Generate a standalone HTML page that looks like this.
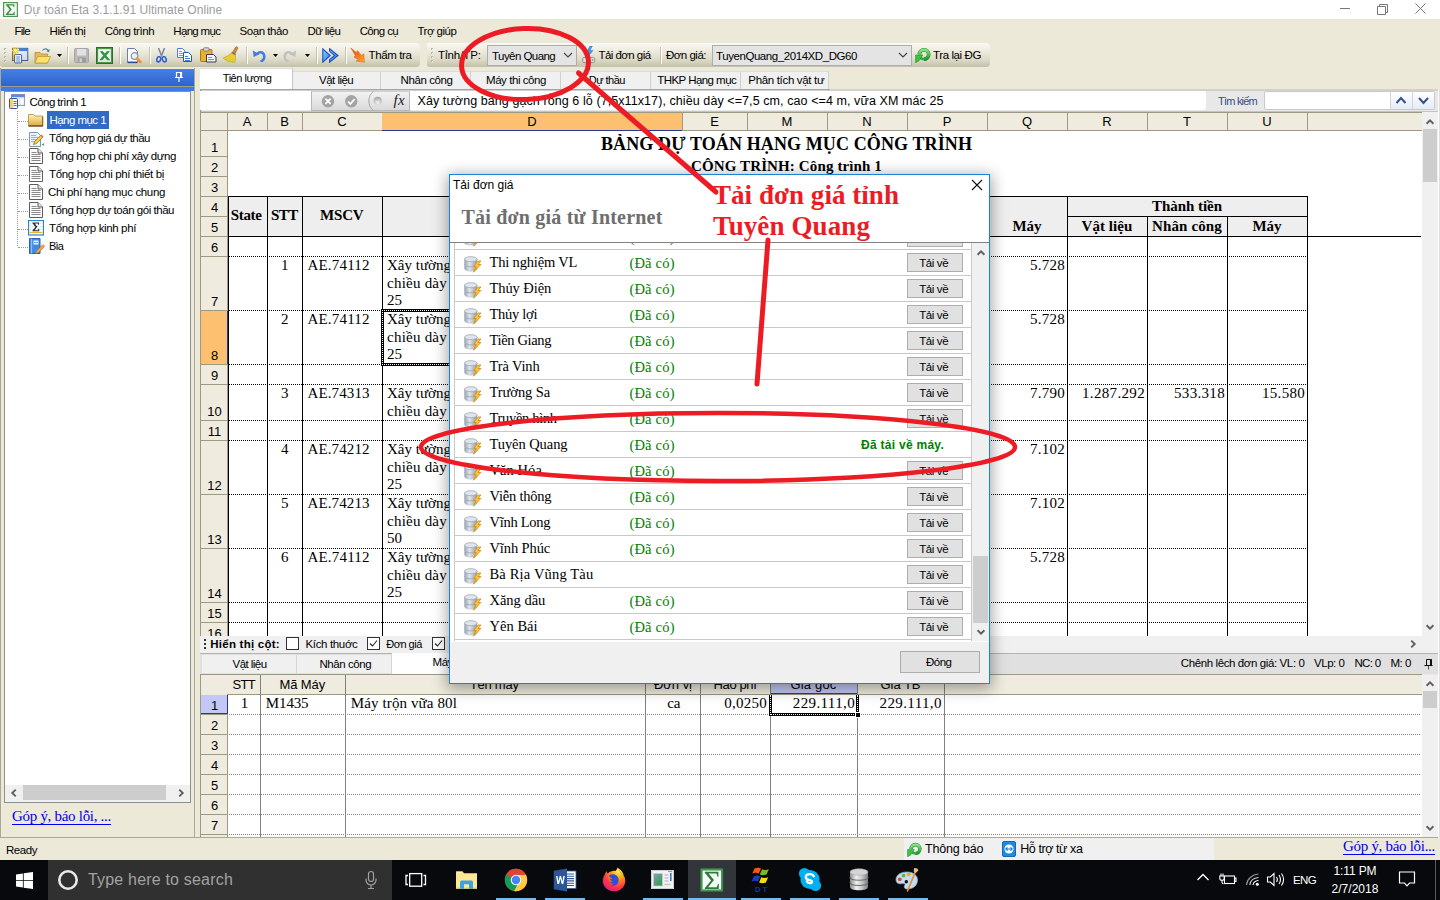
<!DOCTYPE html>
<html lang="vi"><head><meta charset="utf-8"><title>Dự toán Eta</title>
<style>
html,body{margin:0;padding:0;}
body{width:1440px;height:900px;overflow:hidden;position:relative;background:#ece9d8;font-family:'Liberation Sans',sans-serif;}
#root{position:absolute;left:0;top:0;width:1440px;height:900px;overflow:hidden;}
#root div,#root span,#root svg{position:absolute;box-sizing:border-box;}
#root span{white-space:pre;}
</style></head><body><div id="root">
<div style="left:0px;top:0px;width:1440px;height:19px;background:#fff;"></div>
<svg style="left:2.500px;top:1.500px" width="15" height="15" viewBox="0 0 15 15"><rect x="0.600" y="0.600" width="13.800" height="13.800" fill="#f4f8f4" stroke="#4f9a4f" stroke-width="1.200"/><path d="M2.800 2.200h8.600v3h-0.700l-0.600-1.800H5.600l3.200 3.900-3.600 4.400h5l0.800-1.900h0.700v3.200H2.800v-0.800l3.900-4.800-3.900-4.600z" fill="#3f8f3f"/></svg>
<span style="left:23.80px;top:4.00px;font: normal 12px/1 'Liberation Sans',sans-serif;color:#9c9ca0;letter-spacing:0.047px;">Dự toán Eta 3.1.1.91 Ultimate Online</span>
<svg style="left:1330px;top:0px" width="110" height="19" viewBox="0 0 110 19"><g stroke="#777" stroke-width="1" fill="none"><path d="M10 8.5h10"/><path d="M47.5 6.5h8v8h-8z M49.5 6.5v-2h8v8h-2"/><path d="M85.5 3.5l10 10M95.5 3.5l-10 10"/></g></svg>
<div style="left:0px;top:19px;width:1440px;height:24px;background:#ece9d8;"></div>
<span style="left:14.50px;top:26.00px;font: normal 11.5px/1 'Liberation Sans',sans-serif;color:#000;letter-spacing:-0.758px;">File</span>
<span style="left:49.50px;top:26.00px;font: normal 11.5px/1 'Liberation Sans',sans-serif;color:#000;letter-spacing:-0.400px;">Hiển thị</span>
<span style="left:104.70px;top:26.00px;font: normal 11.5px/1 'Liberation Sans',sans-serif;color:#000;letter-spacing:-0.420px;">Công trình</span>
<span style="left:173.30px;top:26.00px;font: normal 11.5px/1 'Liberation Sans',sans-serif;color:#000;letter-spacing:-0.678px;">Hạng mục</span>
<span style="left:239.50px;top:26.00px;font: normal 11.5px/1 'Liberation Sans',sans-serif;color:#000;letter-spacing:-0.438px;">Soạn thảo</span>
<span style="left:307.50px;top:26.00px;font: normal 11.5px/1 'Liberation Sans',sans-serif;color:#000;letter-spacing:-0.616px;">Dữ liệu</span>
<span style="left:359.70px;top:26.00px;font: normal 11.5px/1 'Liberation Sans',sans-serif;color:#000;letter-spacing:-0.649px;">Công cụ</span>
<span style="left:417.50px;top:26.00px;font: normal 11.5px/1 'Liberation Sans',sans-serif;color:#000;letter-spacing:-0.513px;">Trợ giúp</span>
<div style="left:0px;top:43px;width:420px;height:24px;background:linear-gradient(#faf9f4 0%,#edebde 35%,#dedbc9 70%,#c7c4ae 100%);border-radius:0 4px 4px 3px;border-bottom:1px solid #c4c1ad;"></div>
<div style="left:427px;top:43px;width:563px;height:24px;background:linear-gradient(#faf9f4 0%,#edebde 35%,#dedbc9 70%,#c7c4ae 100%);border-radius:0 4px 4px 3px;border-bottom:1px solid #c4c1ad;"></div>
<div style="left:4px;top:48px;width:2px;height:2px;background:#b8b5a2;"></div>
<div style="left:5px;top:49px;width:1px;height:1px;background:#fff;"></div>
<div style="left:4px;top:52px;width:2px;height:2px;background:#b8b5a2;"></div>
<div style="left:5px;top:53px;width:1px;height:1px;background:#fff;"></div>
<div style="left:4px;top:56px;width:2px;height:2px;background:#b8b5a2;"></div>
<div style="left:5px;top:57px;width:1px;height:1px;background:#fff;"></div>
<div style="left:4px;top:60px;width:2px;height:2px;background:#b8b5a2;"></div>
<div style="left:5px;top:61px;width:1px;height:1px;background:#fff;"></div>
<div style="left:431px;top:48px;width:2px;height:2px;background:#b8b5a2;"></div>
<div style="left:432px;top:49px;width:1px;height:1px;background:#fff;"></div>
<div style="left:431px;top:52px;width:2px;height:2px;background:#b8b5a2;"></div>
<div style="left:432px;top:53px;width:1px;height:1px;background:#fff;"></div>
<div style="left:431px;top:56px;width:2px;height:2px;background:#b8b5a2;"></div>
<div style="left:432px;top:57px;width:1px;height:1px;background:#fff;"></div>
<div style="left:431px;top:60px;width:2px;height:2px;background:#b8b5a2;"></div>
<div style="left:432px;top:61px;width:1px;height:1px;background:#fff;"></div>
<div style="left:67px;top:47px;width:1px;height:17px;background:#c5c2b2;"></div>
<div style="left:68px;top:47px;width:1px;height:17px;background:#fff;"></div>
<div style="left:119px;top:47px;width:1px;height:17px;background:#c5c2b2;"></div>
<div style="left:120px;top:47px;width:1px;height:17px;background:#fff;"></div>
<div style="left:149px;top:47px;width:1px;height:17px;background:#c5c2b2;"></div>
<div style="left:150px;top:47px;width:1px;height:17px;background:#fff;"></div>
<div style="left:246px;top:47px;width:1px;height:17px;background:#c5c2b2;"></div>
<div style="left:247px;top:47px;width:1px;height:17px;background:#fff;"></div>
<div style="left:316px;top:47px;width:1px;height:17px;background:#c5c2b2;"></div>
<div style="left:317px;top:47px;width:1px;height:17px;background:#fff;"></div>
<div style="left:345px;top:47px;width:1px;height:17px;background:#c5c2b2;"></div>
<div style="left:346px;top:47px;width:1px;height:17px;background:#fff;"></div>
<span style="left:368.50px;top:50.00px;font: normal 11.5px/1 'Liberation Sans',sans-serif;color:#000;letter-spacing:-0.377px;">Thẩm tra</span>
<span style="left:438.00px;top:50.00px;font: normal 11.5px/1 'Liberation Sans',sans-serif;color:#000;letter-spacing:-0.059px;">Tỉnh/TP:</span>
<div style="left:487px;top:45px;width:90px;height:21px;background:#e4e4e4;border:1px solid #adadad;"></div>
<span style="left:492.00px;top:51.00px;font: normal 11.5px/1 'Liberation Sans',sans-serif;color:#000;letter-spacing:-0.551px;">Tuyên Quang</span>
<svg style="left:563px;top:52px" width="10" height="7" viewBox="0 0 10 7"><path d="M1 1l4 4 4-4" stroke="#444" stroke-width="1.1" fill="none"/></svg>
<span style="left:598.50px;top:50.00px;font: normal 11.5px/1 'Liberation Sans',sans-serif;color:#000;letter-spacing:-0.550px;">Tải đơn giá</span>
<div style="left:660px;top:47px;width:1px;height:17px;background:#c5c2b2;"></div>
<div style="left:661px;top:47px;width:1px;height:17px;background:#fff;"></div>
<span style="left:666.00px;top:50.00px;font: normal 11.5px/1 'Liberation Sans',sans-serif;color:#000;letter-spacing:-0.498px;">Đơn giá:</span>
<div style="left:712px;top:45px;width:200px;height:21px;background:#e4e4e4;border:1px solid #adadad;"></div>
<span style="left:716.00px;top:51.00px;font: normal 11.5px/1 'Liberation Sans',sans-serif;color:#000;letter-spacing:-0.430px;">TuyenQuang_2014XD_DG60</span>
<svg style="left:898px;top:52px" width="10" height="7" viewBox="0 0 10 7"><path d="M1 1l4 4 4-4" stroke="#444" stroke-width="1.1" fill="none"/></svg>
<span style="left:933.00px;top:50.00px;font: normal 11.5px/1 'Liberation Sans',sans-serif;color:#000;letter-spacing:-0.398px;">Tra lại ĐG</span>
<div style="left:195px;top:69px;width:1245px;height:22px;background:#ece9d8;"></div>
<div style="left:200px;top:68px;width:93px;height:22px;background:#fff;border-right:1px solid #c4c4c4;border-top:1px solid #e0e0e0;"></div>
<span style="left:222.80px;top:73.00px;font: normal 11px/1 'Liberation Sans',sans-serif;color:#000;letter-spacing:-0.481px;">Tiên lượng</span>
<div style="left:293px;top:71px;width:88px;height:18px;background:#f0f0f0;border-right:1px solid #d0d0d0;border-top:1px solid #dcdcdc;"></div>
<span style="left:319.00px;top:75.00px;font: normal 11.5px/1 'Liberation Sans',sans-serif;color:#000;letter-spacing:-0.520px;">Vật liệu</span>
<div style="left:381px;top:71px;width:90px;height:18px;background:#f0f0f0;border-right:1px solid #d0d0d0;border-top:1px solid #dcdcdc;"></div>
<span style="left:400.50px;top:75.00px;font: normal 11.5px/1 'Liberation Sans',sans-serif;color:#000;letter-spacing:-0.403px;">Nhân công</span>
<div style="left:471px;top:71px;width:90px;height:18px;background:#f0f0f0;border-right:1px solid #d0d0d0;border-top:1px solid #dcdcdc;"></div>
<span style="left:486.00px;top:75.00px;font: normal 11.5px/1 'Liberation Sans',sans-serif;color:#000;letter-spacing:-0.434px;">Máy thi công</span>
<div style="left:561px;top:71px;width:90px;height:18px;background:#f0f0f0;border-right:1px solid #d0d0d0;border-top:1px solid #dcdcdc;"></div>
<span style="left:588.80px;top:75.00px;font: normal 11px/1 'Liberation Sans',sans-serif;color:#000;letter-spacing:-0.540px;">Dự thầu</span>
<div style="left:651px;top:71px;width:90px;height:18px;background:#f0f0f0;border-right:1px solid #d0d0d0;border-top:1px solid #dcdcdc;"></div>
<span style="left:657.20px;top:75.00px;font: normal 11.5px/1 'Liberation Sans',sans-serif;color:#000;letter-spacing:-0.544px;">THKP Hạng mục</span>
<div style="left:741px;top:71px;width:88px;height:18px;background:#f0f0f0;border-right:1px solid #d0d0d0;border-top:1px solid #dcdcdc;"></div>
<span style="left:748.30px;top:75.00px;font: normal 11.5px/1 'Liberation Sans',sans-serif;color:#000;letter-spacing:-0.326px;">Phân tích vật tư</span>
<div style="left:200px;top:89px;width:630px;height:1px;background:#a4a4a4;"></div>
<div style="left:830px;top:89px;width:610px;height:1px;background:#d4d2c8;"></div>
<div style="left:200px;top:90px;width:1240px;height:22px;background:#e8e8e8;border-top:1px solid #d0d0d0;border-bottom:1px solid #c4c4c4;"></div>
<div style="left:200px;top:90px;width:1px;height:22px;background:#8a8f99;"></div>
<div style="left:200px;top:91px;width:111px;height:19px;background:#fff;"></div>
<div style="left:311px;top:91px;width:99px;height:20px;background:linear-gradient(#f2f2f2,#dadada);border:1px solid #b8b8b8;border-top-color:#d0d0d0;"></div>
<div style="left:410px;top:91px;width:796px;height:19px;background:#fff;border-radius:0 3px 3px 0;"></div>
<svg style="left:318px;top:91px" width="90" height="20" viewBox="0 0 90 20"><defs><radialGradient id="sph" cx="0.500" cy="0.750" r="0.700"><stop offset="0" stop-color="#f4f4f6"/><stop offset="1" stop-color="#a8a8ac"/></radialGradient></defs><circle cx="10" cy="10.300" r="6.200" fill="#a4a4a4"/><path d="M7.400 7.700l5.200 5.200M12.600 7.700l-5.200 5.200" stroke="#fff" stroke-width="1.700"/><circle cx="33.300" cy="10.300" r="6.200" fill="#a4a4a4"/><path d="M30 10.500l2.400 2.500L36.600 8" stroke="#fff" stroke-width="1.800" fill="none"/><path d="M55.500 0.300A12.400 12.400 0 0 0 55.500 19.700" stroke="#a0a0a0" fill="none" stroke-width="0.900"/><circle cx="59.700" cy="9.800" r="4" fill="url(#sph)"/></svg>
<span style="left:393.50px;top:93.00px;font:italic normal 15px/1 'Liberation Serif',serif;color:#222;letter-spacing:0.336px;">fx</span>
<span style="left:417.50px;top:95.00px;font: normal 12.5px/1 'Liberation Sans',sans-serif;color:#000;letter-spacing:0.083px;">Xây tường bằng gạch rỗng 6 lỗ (7,5x11x17), chiều dày &lt;=7,5 cm, cao &lt;=4 m, vữa XM mác 25</span>
<span style="left:1218.00px;top:96.00px;font: normal 11px/1 'Liberation Sans',sans-serif;color:#3b4a8c;letter-spacing:-0.779px;">Tìm kiếm</span>
<div style="left:1264px;top:91px;width:171px;height:19px;background:#fff;border:1px solid #c9c9c9;border-radius:2px;"></div>
<div style="left:1390px;top:92px;width:22px;height:17px;background:linear-gradient(#fff,#e4ecf7);border-left:1px solid #d4d4d4;"></div>
<div style="left:1412px;top:92px;width:22px;height:17px;background:linear-gradient(#fff,#e4ecf7);border-left:1px solid #d4d4d4;"></div>
<svg style="left:1390px;top:92px" width="45" height="17" viewBox="0 0 45 17"><g stroke="#34508c" stroke-width="2" fill="none"><path d="M6.500 11l4.500-5 4.500 5"/><path d="M29 6l4.500 5 4.500-5"/></g></svg>
<div style="left:0px;top:68px;width:195px;height:770px;background:#ece9d8;border-right:1px solid #aca899;border-left:1px solid #aca899;"></div>
<div style="left:1px;top:69px;width:193px;height:17px;background:linear-gradient(#4480e6,#2f63cc);"></div>
<div style="left:1px;top:86px;width:193px;height:1px;background:#a09c8a;"></div>
<div style="left:1px;top:87px;width:193px;height:4px;background:#3f7be6;"></div>
<svg style="left:174px;top:71px" width="10" height="12" viewBox="0 0 10 12"><path d="M2.500 1.500h5v5h-5z M1 6.500h8 M5 6.500v4.500" stroke="#fff" fill="none" stroke-width="1.2"/><rect x="6" y="2" width="1.500" height="4.500" fill="#fff"/></svg>
<div style="left:4px;top:91px;width:187px;height:712px;background:#fff;border:1px solid #8e8f8f;"></div>
<span style="left:29.50px;top:97.00px;font: normal 11.5px/1 'Liberation Sans',sans-serif;color:#000;letter-spacing:-0.566px;">Công trình 1</span>
<div style="left:47px;top:111px;width:62px;height:18px;background:#316ac5;"></div>
<span style="left:49.50px;top:115.00px;font: normal 11.5px/1 'Liberation Sans',sans-serif;color:#fff;letter-spacing:-0.552px;">Hạng mục 1</span>
<span style="left:49.00px;top:133.00px;font: normal 11.5px/1 'Liberation Sans',sans-serif;color:#000;letter-spacing:-0.508px;">Tổng hợp giá dự thầu</span>
<span style="left:49.00px;top:151.00px;font: normal 11.5px/1 'Liberation Sans',sans-serif;color:#000;letter-spacing:-0.440px;">Tổng hợp chi phí xây dựng</span>
<span style="left:49.00px;top:169.00px;font: normal 11.5px/1 'Liberation Sans',sans-serif;color:#000;letter-spacing:-0.356px;">Tổng hợp chi phí thiết bị</span>
<span style="left:48.00px;top:187.00px;font: normal 11.5px/1 'Liberation Sans',sans-serif;color:#000;letter-spacing:-0.349px;">Chi phí hạng mục chung</span>
<span style="left:49.00px;top:205.00px;font: normal 11.5px/1 'Liberation Sans',sans-serif;color:#000;letter-spacing:-0.469px;">Tổng hợp dự toán gói thầu</span>
<span style="left:49.00px;top:223.00px;font: normal 11.5px/1 'Liberation Sans',sans-serif;color:#000;letter-spacing:-0.366px;">Tổng hợp kinh phí</span>
<span style="left:49.00px;top:241.00px;font: normal 11px/1 'Liberation Sans',sans-serif;color:#000;letter-spacing:-0.839px;">Bìa</span>
<div style="left:17px;top:111px;width:1px;height:135px;border-left:1px dotted #9a9a9a;"></div>
<div style="left:18px;top:121px;width:10px;height:1px;border-top:1px dotted #9a9a9a;"></div>
<div style="left:18px;top:139px;width:10px;height:1px;border-top:1px dotted #9a9a9a;"></div>
<div style="left:18px;top:157px;width:10px;height:1px;border-top:1px dotted #9a9a9a;"></div>
<div style="left:18px;top:175px;width:10px;height:1px;border-top:1px dotted #9a9a9a;"></div>
<div style="left:18px;top:193px;width:10px;height:1px;border-top:1px dotted #9a9a9a;"></div>
<div style="left:18px;top:211px;width:10px;height:1px;border-top:1px dotted #9a9a9a;"></div>
<div style="left:18px;top:229px;width:10px;height:1px;border-top:1px dotted #9a9a9a;"></div>
<div style="left:18px;top:247px;width:10px;height:1px;border-top:1px dotted #9a9a9a;"></div>
<div style="left:5px;top:785px;width:185px;height:17px;background:#f0f0f0;"></div>
<div style="left:23px;top:785px;width:143px;height:15px;background:#cdcdcd;"></div>
<svg style="left:6px;top:784.5px" width="16" height="16" viewBox="-8 -8 16 16"><path d="M1.75 -3.4L-1.75 0L1.75 3.4" stroke="#606060" stroke-width="1.9" fill="none"/></svg>
<svg style="left:173px;top:784.5px" width="16" height="16" viewBox="-8 -8 16 16"><path d="M-1.75 -3.4L1.75 0L-1.75 3.4" stroke="#606060" stroke-width="1.9" fill="none"/></svg>
<span style="left:12.00px;top:809.00px;font: normal 15px/1 'Liberation Serif',serif;color:#0000ee;letter-spacing:-0.294px;text-decoration:underline;text-decoration-thickness:1px;text-underline-offset:3px;">Góp ý, báo lỗi, ...</span>
<div style="left:0px;top:837px;width:1440px;height:23px;background:#ece9d8;border-top:1px solid #aca899;"></div>
<span style="left:6.00px;top:845.00px;font: normal 11.5px/1 'Liberation Sans',sans-serif;color:#000;letter-spacing:-0.450px;">Ready</span>
<div style="left:200px;top:112px;width:1222px;height:524px;background:#fff;"></div>
<div style="left:200px;top:112px;width:1222px;height:19px;background:#efebde;border-top:1px solid #9d9a82;border-bottom:1px solid #9d9a82;"></div>
<div style="left:200px;top:112px;width:1px;height:524px;background:#9d9a82;"></div>
<div style="left:227px;top:113px;width:1px;height:18px;background:#9d9a82;"></div>
<div style="left:267px;top:113px;width:1px;height:18px;background:#9d9a82;"></div>
<span style="left:242.66px;top:115.00px;font: normal 13px/1 'Liberation Sans',sans-serif;color:#000;">A</span>
<div style="left:302px;top:113px;width:1px;height:18px;background:#9d9a82;"></div>
<span style="left:280.16px;top:115.00px;font: normal 13px/1 'Liberation Sans',sans-serif;color:#000;">B</span>
<div style="left:382px;top:113px;width:1px;height:18px;background:#9d9a82;"></div>
<span style="left:337.30px;top:115.00px;font: normal 13px/1 'Liberation Sans',sans-serif;color:#000;">C</span>
<div style="left:382px;top:113px;width:300px;height:18px;background:#fdc070;border-bottom:1px solid #2a3a9a;"></div>
<div style="left:682px;top:113px;width:1px;height:18px;background:#9d9a82;"></div>
<span style="left:527.30px;top:115.00px;font: normal 13px/1 'Liberation Sans',sans-serif;color:#000;">D</span>
<div style="left:747px;top:113px;width:1px;height:18px;background:#9d9a82;"></div>
<span style="left:710.16px;top:115.00px;font: normal 13px/1 'Liberation Sans',sans-serif;color:#000;">E</span>
<div style="left:827px;top:113px;width:1px;height:18px;background:#9d9a82;"></div>
<span style="left:781.58px;top:115.00px;font: normal 13px/1 'Liberation Sans',sans-serif;color:#000;">M</span>
<div style="left:907px;top:113px;width:1px;height:18px;background:#9d9a82;"></div>
<span style="left:862.30px;top:115.00px;font: normal 13px/1 'Liberation Sans',sans-serif;color:#000;">N</span>
<div style="left:987px;top:113px;width:1px;height:18px;background:#9d9a82;"></div>
<span style="left:942.66px;top:115.00px;font: normal 13px/1 'Liberation Sans',sans-serif;color:#000;">P</span>
<div style="left:1067px;top:113px;width:1px;height:18px;background:#9d9a82;"></div>
<span style="left:1021.94px;top:115.00px;font: normal 13px/1 'Liberation Sans',sans-serif;color:#000;">Q</span>
<div style="left:1147px;top:113px;width:1px;height:18px;background:#9d9a82;"></div>
<span style="left:1102.30px;top:115.00px;font: normal 13px/1 'Liberation Sans',sans-serif;color:#000;">R</span>
<div style="left:1227px;top:113px;width:1px;height:18px;background:#9d9a82;"></div>
<span style="left:1183.02px;top:115.00px;font: normal 13px/1 'Liberation Sans',sans-serif;color:#000;">T</span>
<div style="left:1307px;top:113px;width:1px;height:18px;background:#9d9a82;"></div>
<span style="left:1262.30px;top:115.00px;font: normal 13px/1 'Liberation Sans',sans-serif;color:#000;">U</span>
<div style="left:201px;top:131px;width:27px;height:505px;background:#efebde;border-right:1px solid #9d9a82;"></div>
<div style="left:201px;top:156px;width:27px;height:1px;background:#9d9a82;"></div>
<span style="left:210.88px;top:141.00px;font: normal 13px/1 'Liberation Sans',sans-serif;color:#000;">1</span>
<div style="left:201px;top:176px;width:27px;height:1px;background:#9d9a82;"></div>
<span style="left:210.88px;top:161.00px;font: normal 13px/1 'Liberation Sans',sans-serif;color:#000;">2</span>
<div style="left:201px;top:196px;width:27px;height:1px;background:#9d9a82;"></div>
<span style="left:210.88px;top:181.00px;font: normal 13px/1 'Liberation Sans',sans-serif;color:#000;">3</span>
<div style="left:201px;top:216px;width:27px;height:1px;background:#9d9a82;"></div>
<span style="left:210.88px;top:201.00px;font: normal 13px/1 'Liberation Sans',sans-serif;color:#000;">4</span>
<div style="left:201px;top:236px;width:27px;height:1px;background:#9d9a82;"></div>
<span style="left:210.88px;top:221.00px;font: normal 13px/1 'Liberation Sans',sans-serif;color:#000;">5</span>
<div style="left:201px;top:256px;width:27px;height:1px;background:#9d9a82;"></div>
<span style="left:210.88px;top:241.00px;font: normal 13px/1 'Liberation Sans',sans-serif;color:#000;">6</span>
<div style="left:201px;top:310px;width:27px;height:1px;background:#9d9a82;"></div>
<span style="left:210.88px;top:295.00px;font: normal 13px/1 'Liberation Sans',sans-serif;color:#000;">7</span>
<div style="left:201px;top:311px;width:27px;height:54px;background:#fdc070;border-right:1px solid #2a3a9a;"></div>
<div style="left:201px;top:364px;width:27px;height:1px;background:#9d9a82;"></div>
<span style="left:210.88px;top:349.00px;font: normal 13px/1 'Liberation Sans',sans-serif;color:#000;">8</span>
<div style="left:201px;top:384px;width:27px;height:1px;background:#9d9a82;"></div>
<span style="left:210.88px;top:369.00px;font: normal 13px/1 'Liberation Sans',sans-serif;color:#000;">9</span>
<div style="left:201px;top:420px;width:27px;height:1px;background:#9d9a82;"></div>
<span style="left:207.27px;top:405.00px;font: normal 13px/1 'Liberation Sans',sans-serif;color:#000;">10</span>
<div style="left:201px;top:440px;width:27px;height:1px;background:#9d9a82;"></div>
<span style="left:207.75px;top:425.00px;font: normal 13px/1 'Liberation Sans',sans-serif;color:#000;">11</span>
<div style="left:201px;top:494px;width:27px;height:1px;background:#9d9a82;"></div>
<span style="left:207.27px;top:479.00px;font: normal 13px/1 'Liberation Sans',sans-serif;color:#000;">12</span>
<div style="left:201px;top:548px;width:27px;height:1px;background:#9d9a82;"></div>
<span style="left:207.27px;top:533.00px;font: normal 13px/1 'Liberation Sans',sans-serif;color:#000;">13</span>
<div style="left:201px;top:602px;width:27px;height:1px;background:#9d9a82;"></div>
<span style="left:207.27px;top:587.00px;font: normal 13px/1 'Liberation Sans',sans-serif;color:#000;">14</span>
<div style="left:201px;top:622px;width:27px;height:1px;background:#9d9a82;"></div>
<span style="left:207.27px;top:607.00px;font: normal 13px/1 'Liberation Sans',sans-serif;color:#000;">15</span>
<div style="left:201px;top:642px;width:27px;height:1px;background:#9d9a82;"></div>
<span style="left:207.27px;top:627.00px;font: normal 13px/1 'Liberation Sans',sans-serif;color:#000;">16</span>
<span style="left:601.00px;top:135.00px;font: bold 18px/1 'Liberation Serif',serif;color:#000;letter-spacing:0.114px;">BẢNG DỰ TOÁN HẠNG MỤC CÔNG TRÌNH</span>
<span style="left:691.00px;top:159.00px;font: bold 15px/1 'Liberation Serif',serif;color:#000;letter-spacing:0.121px;">CÔNG TRÌNH: Công trình 1</span>
<div style="left:228px;top:196px;width:1079px;height:40px;background:#eeeeee;"></div>
<div style="left:228px;top:196px;width:1080px;height:1px;background:#000;"></div>
<div style="left:1067px;top:216px;width:240px;height:1px;background:#000;"></div>
<div style="left:228px;top:236px;width:1193px;height:1px;background:#000;"></div>
<div style="left:228px;top:196px;width:1px;height:440px;background:#000;"></div>
<div style="left:267px;top:196px;width:1px;height:440px;background:#000;"></div>
<div style="left:302px;top:196px;width:1px;height:440px;background:#000;"></div>
<div style="left:382px;top:196px;width:1px;height:440px;background:#000;"></div>
<div style="left:987px;top:196px;width:1px;height:440px;background:#000;"></div>
<div style="left:1067px;top:196px;width:1px;height:440px;background:#000;"></div>
<div style="left:1307px;top:196px;width:1px;height:440px;background:#000;"></div>
<div style="left:1147px;top:216px;width:1px;height:420px;background:#000;"></div>
<div style="left:1227px;top:216px;width:1px;height:420px;background:#000;"></div>
<span style="left:230.70px;top:208.00px;font: bold 15px/1 'Liberation Serif',serif;color:#000;letter-spacing:-0.300px;">State</span>
<span style="left:271.00px;top:208.00px;font: bold 15px/1 'Liberation Serif',serif;color:#000;letter-spacing:-0.553px;">STT</span>
<span style="left:320.00px;top:208.00px;font: bold 15px/1 'Liberation Serif',serif;color:#000;letter-spacing:-0.168px;">MSCV</span>
<span style="left:1152.00px;top:199.00px;font: bold 15px/1 'Liberation Serif',serif;color:#000;letter-spacing:-0.045px;">Thành tiền</span>
<span style="left:1012.50px;top:219.00px;font: bold 15px/1 'Liberation Serif',serif;color:#000;letter-spacing:-0.057px;">Máy</span>
<span style="left:1081.50px;top:219.00px;font: bold 15px/1 'Liberation Serif',serif;color:#000;letter-spacing:0.072px;">Vật liệu</span>
<span style="left:1152.00px;top:219.00px;font: bold 15px/1 'Liberation Serif',serif;color:#000;letter-spacing:0.135px;">Nhân công</span>
<span style="left:1252.50px;top:219.00px;font: bold 15px/1 'Liberation Serif',serif;color:#000;letter-spacing:-0.057px;">Máy</span>
<div style="left:229px;top:256px;width:1078px;height:1px;background:repeating-linear-gradient(90deg,#000 0 1px,transparent 1px 2px);"></div>
<div style="left:229px;top:310px;width:1078px;height:1px;background:repeating-linear-gradient(90deg,#000 0 1px,transparent 1px 2px);"></div>
<div style="left:229px;top:364px;width:1078px;height:1px;background:repeating-linear-gradient(90deg,#000 0 1px,transparent 1px 2px);"></div>
<div style="left:229px;top:384px;width:1078px;height:1px;background:repeating-linear-gradient(90deg,#000 0 1px,transparent 1px 2px);"></div>
<div style="left:229px;top:420px;width:1078px;height:1px;background:repeating-linear-gradient(90deg,#000 0 1px,transparent 1px 2px);"></div>
<div style="left:229px;top:440px;width:1078px;height:1px;background:repeating-linear-gradient(90deg,#000 0 1px,transparent 1px 2px);"></div>
<div style="left:229px;top:494px;width:1078px;height:1px;background:repeating-linear-gradient(90deg,#000 0 1px,transparent 1px 2px);"></div>
<div style="left:229px;top:548px;width:1078px;height:1px;background:repeating-linear-gradient(90deg,#000 0 1px,transparent 1px 2px);"></div>
<div style="left:229px;top:602px;width:1078px;height:1px;background:repeating-linear-gradient(90deg,#000 0 1px,transparent 1px 2px);"></div>
<div style="left:229px;top:622px;width:1078px;height:1px;background:repeating-linear-gradient(90deg,#000 0 1px,transparent 1px 2px);"></div>
<span style="left:280.95px;top:258.00px;font: normal 15px/1 'Liberation Serif',serif;color:#000;">1</span>
<span style="left:307.50px;top:258.00px;font: normal 15px/1 'Liberation Serif',serif;color:#000;letter-spacing:0.187px;">AE.74112</span>
<span style="left:387.00px;top:258.00px;font: normal 15px/1 'Liberation Serif',serif;color:#000;letter-spacing:0.002px;">Xây tường</span>
<span style="left:387.00px;top:276.00px;font: normal 15px/1 'Liberation Serif',serif;color:#000;letter-spacing:0.234px;">chiều dày</span>
<span style="left:387.00px;top:293.00px;font: normal 15px/1 'Liberation Serif',serif;color:#000;">25</span>
<span style="left:1030.00px;top:258.00px;font: normal 15px/1 'Liberation Serif',serif;color:#000;letter-spacing:0.250px;">5.728</span>
<span style="left:280.95px;top:312.00px;font: normal 15px/1 'Liberation Serif',serif;color:#000;">2</span>
<span style="left:307.50px;top:312.00px;font: normal 15px/1 'Liberation Serif',serif;color:#000;letter-spacing:0.187px;">AE.74112</span>
<span style="left:387.00px;top:312.00px;font: normal 15px/1 'Liberation Serif',serif;color:#000;letter-spacing:0.002px;">Xây tường</span>
<span style="left:387.00px;top:330.00px;font: normal 15px/1 'Liberation Serif',serif;color:#000;letter-spacing:0.234px;">chiều dày</span>
<span style="left:387.00px;top:347.00px;font: normal 15px/1 'Liberation Serif',serif;color:#000;">25</span>
<span style="left:1030.00px;top:312.00px;font: normal 15px/1 'Liberation Serif',serif;color:#000;letter-spacing:0.250px;">5.728</span>
<span style="left:280.95px;top:386.00px;font: normal 15px/1 'Liberation Serif',serif;color:#000;">3</span>
<span style="left:307.50px;top:386.00px;font: normal 15px/1 'Liberation Serif',serif;color:#000;letter-spacing:0.119px;">AE.74313</span>
<span style="left:387.00px;top:386.00px;font: normal 15px/1 'Liberation Serif',serif;color:#000;letter-spacing:0.002px;">Xây tường</span>
<span style="left:387.00px;top:404.00px;font: normal 15px/1 'Liberation Serif',serif;color:#000;letter-spacing:0.234px;">chiều dày</span>
<span style="left:1030.00px;top:386.00px;font: normal 15px/1 'Liberation Serif',serif;color:#000;letter-spacing:0.250px;">7.790</span>
<span style="left:280.95px;top:442.00px;font: normal 15px/1 'Liberation Serif',serif;color:#000;">4</span>
<span style="left:307.50px;top:442.00px;font: normal 15px/1 'Liberation Serif',serif;color:#000;letter-spacing:0.119px;">AE.74212</span>
<span style="left:387.00px;top:442.00px;font: normal 15px/1 'Liberation Serif',serif;color:#000;letter-spacing:0.002px;">Xây tường</span>
<span style="left:387.00px;top:460.00px;font: normal 15px/1 'Liberation Serif',serif;color:#000;letter-spacing:0.234px;">chiều dày</span>
<span style="left:387.00px;top:477.00px;font: normal 15px/1 'Liberation Serif',serif;color:#000;">25</span>
<span style="left:1030.00px;top:442.00px;font: normal 15px/1 'Liberation Serif',serif;color:#000;letter-spacing:0.250px;">7.102</span>
<span style="left:280.95px;top:496.00px;font: normal 15px/1 'Liberation Serif',serif;color:#000;">5</span>
<span style="left:307.50px;top:496.00px;font: normal 15px/1 'Liberation Serif',serif;color:#000;letter-spacing:0.119px;">AE.74213</span>
<span style="left:387.00px;top:496.00px;font: normal 15px/1 'Liberation Serif',serif;color:#000;letter-spacing:0.002px;">Xây tường</span>
<span style="left:387.00px;top:514.00px;font: normal 15px/1 'Liberation Serif',serif;color:#000;letter-spacing:0.234px;">chiều dày</span>
<span style="left:387.00px;top:531.00px;font: normal 15px/1 'Liberation Serif',serif;color:#000;">50</span>
<span style="left:1030.00px;top:496.00px;font: normal 15px/1 'Liberation Serif',serif;color:#000;letter-spacing:0.250px;">7.102</span>
<span style="left:280.95px;top:550.00px;font: normal 15px/1 'Liberation Serif',serif;color:#000;">6</span>
<span style="left:307.50px;top:550.00px;font: normal 15px/1 'Liberation Serif',serif;color:#000;letter-spacing:0.187px;">AE.74112</span>
<span style="left:387.00px;top:550.00px;font: normal 15px/1 'Liberation Serif',serif;color:#000;letter-spacing:0.002px;">Xây tường</span>
<span style="left:387.00px;top:568.00px;font: normal 15px/1 'Liberation Serif',serif;color:#000;letter-spacing:0.234px;">chiều dày</span>
<span style="left:387.00px;top:585.00px;font: normal 15px/1 'Liberation Serif',serif;color:#000;">25</span>
<span style="left:1030.00px;top:550.00px;font: normal 15px/1 'Liberation Serif',serif;color:#000;letter-spacing:0.250px;">5.728</span>
<span style="left:1082.00px;top:386.00px;font: normal 15px/1 'Liberation Serif',serif;color:#000;letter-spacing:0.333px;">1.287.292</span>
<span style="left:1174.00px;top:386.00px;font: normal 15px/1 'Liberation Serif',serif;color:#000;letter-spacing:0.321px;">533.318</span>
<span style="left:1262.00px;top:386.00px;font: normal 15px/1 'Liberation Serif',serif;color:#000;letter-spacing:0.292px;">15.580</span>
<div style="left:381px;top:309px;width:303px;height:57px;border:3px solid #000;"></div>
<div style="left:382px;top:310px;width:301px;height:55px;border:1px dotted #fff;"></div>
<div style="left:1422px;top:112px;width:15.5px;height:524px;background:#f0f0f0;"></div>
<div style="left:1422.5px;top:129px;width:14.5px;height:53px;background:#cdcdcd;"></div>
<svg style="left:1421.5px;top:113.5px" width="16" height="16" viewBox="-8 -8 16 16"><path d="M-3.4 1.75L0 -1.75L3.4 1.75" stroke="#606060" stroke-width="1.9" fill="none"/></svg>
<svg style="left:1421.5px;top:619px" width="16" height="16" viewBox="-8 -8 16 16"><path d="M-3.4 -1.75L0 1.75L3.4 -1.75" stroke="#606060" stroke-width="1.9" fill="none"/></svg>
<div style="left:200px;top:636px;width:1238px;height:17px;background:#f0f0f0;"></div>
<svg style="left:1405px;top:635.5px" width="16" height="16" viewBox="-8 -8 16 16"><path d="M-1.75 -3.4L1.75 0L-1.75 3.4" stroke="#606060" stroke-width="1.9" fill="none"/></svg>
<div style="left:204px;top:639px;width:2px;height:2px;background:#333;"></div>
<div style="left:204px;top:643px;width:2px;height:2px;background:#333;"></div>
<div style="left:204px;top:647px;width:2px;height:2px;background:#333;"></div>
<span style="left:210.30px;top:639.00px;font: bold 11.5px/1 'Liberation Sans',sans-serif;color:#000;letter-spacing:0.234px;">Hiển thị cột:</span>
<div style="left:286px;top:637px;width:13px;height:13px;background:#fff;border:1px solid #333;"></div>
<div style="left:367px;top:637px;width:13px;height:13px;background:#fff;border:1px solid #333;"></div>
<div style="left:432px;top:637px;width:13px;height:13px;background:#fff;border:1px solid #333;"></div>
<svg style="left:367px;top:637px" width="13" height="13" viewBox="0 0 13 13"><path d="M3 6.500l2.500 2.500L10 3.500" stroke="#222" stroke-width="1.100" fill="none"/></svg>
<svg style="left:432px;top:637px" width="13" height="13" viewBox="0 0 13 13"><path d="M3 6.500l2.500 2.500L10 3.500" stroke="#222" stroke-width="1.100" fill="none"/></svg>
<span style="left:305.50px;top:639.00px;font: normal 11.5px/1 'Liberation Sans',sans-serif;color:#000;letter-spacing:-0.348px;">Kích thuớc</span>
<span style="left:386.30px;top:639.00px;font: normal 11px/1 'Liberation Sans',sans-serif;color:#000;letter-spacing:-0.502px;">Đơn giá</span>
<div style="left:200px;top:653px;width:1238px;height:21px;background:#e0e0e0;border-top:1px solid #b4b4b4;"></div>
<div style="left:202px;top:655px;width:95px;height:18px;background:#f0f0f0;border-right:1px solid #d4d4d4;"></div>
<div style="left:297px;top:655px;width:95px;height:18px;background:#f0f0f0;border-right:1px solid #d4d4d4;"></div>
<div style="left:392px;top:653px;width:130px;height:21px;background:#fff;"></div>
<span style="left:232.50px;top:659.00px;font: normal 11.5px/1 'Liberation Sans',sans-serif;color:#000;letter-spacing:-0.545px;">Vật liệu</span>
<span style="left:319.40px;top:659.00px;font: normal 11.5px/1 'Liberation Sans',sans-serif;color:#000;letter-spacing:-0.436px;">Nhân công</span>
<span style="left:432.50px;top:657.00px;font: normal 11.5px/1 'Liberation Sans',sans-serif;color:#000;letter-spacing:-0.434px;">Máy thi công</span>
<span style="left:1180.80px;top:658.00px;font: normal 11.5px/1 'Liberation Sans',sans-serif;color:#000;letter-spacing:-0.392px;">Chênh lêch đơn giá: VL: 0</span>
<span style="left:1314.00px;top:658.00px;font: normal 11.5px/1 'Liberation Sans',sans-serif;color:#000;letter-spacing:-0.458px;">VLp: 0</span>
<span style="left:1354.40px;top:658.00px;font: normal 11.5px/1 'Liberation Sans',sans-serif;color:#000;letter-spacing:-0.641px;">NC: 0</span>
<span style="left:1390.50px;top:658.00px;font: normal 11.5px/1 'Liberation Sans',sans-serif;color:#000;letter-spacing:-0.469px;">M: 0</span>
<svg style="left:1423px;top:657px" width="12" height="13" viewBox="0 0 12 13"><path d="M3.500 2.500h5v6h-5z M1.500 8.500h8" stroke="#111" fill="none"/><rect x="7" y="2" width="1.500" height="6.500" fill="#111"/><path d="M5.500 9v3.500" stroke="#6a3a6a"/></svg>
<div style="left:200px;top:674px;width:1222px;height:163px;background:#fff;"></div>
<div style="left:200px;top:674px;width:1222px;height:21px;background:#efebde;border-top:1px solid #9d9a82;border-bottom:1px solid #9d9a82;"></div>
<div style="left:200px;top:674px;width:1px;height:163px;background:#9d9a82;"></div>
<div style="left:201px;top:694px;width:27px;height:143px;background:#efebde;border-right:1px solid #9d9a82;"></div>
<span style="left:232.50px;top:678.00px;font: normal 13px/1 'Liberation Sans',sans-serif;color:#000;letter-spacing:-0.688px;">STT</span>
<span style="left:279.40px;top:678.00px;font: normal 13px/1 'Liberation Sans',sans-serif;color:#000;letter-spacing:-0.072px;">Mã Máy</span>
<span style="left:469.75px;top:678.00px;font: normal 13px/1 'Liberation Sans',sans-serif;color:#000;letter-spacing:-0.225px;">Tên máy</span>
<span style="left:654.00px;top:678.00px;font: normal 13px/1 'Liberation Sans',sans-serif;color:#000;letter-spacing:-0.026px;">Đơn vị</span>
<span style="left:713.50px;top:678.00px;font: normal 13px/1 'Liberation Sans',sans-serif;color:#000;letter-spacing:-0.364px;">Hao phí</span>
<div style="left:770px;top:675px;width:87px;height:19px;background:#c3c7f5;border-bottom:1px solid #2a3a9a;"></div>
<span style="left:790.50px;top:678.00px;font: normal 13px/1 'Liberation Sans',sans-serif;color:#000;letter-spacing:0.170px;">Giá gốc</span>
<span style="left:880.50px;top:678.00px;font: normal 13px/1 'Liberation Sans',sans-serif;color:#000;letter-spacing:-0.036px;">Giá TB</span>
<div style="left:260px;top:675px;width:1px;height:162px;background:#808080;"></div>
<div style="left:345px;top:675px;width:1px;height:162px;background:#808080;"></div>
<div style="left:645px;top:675px;width:1px;height:162px;background:#808080;"></div>
<div style="left:700px;top:675px;width:1px;height:162px;background:#808080;"></div>
<div style="left:770px;top:675px;width:1px;height:162px;background:#808080;"></div>
<div style="left:857px;top:675px;width:1px;height:162px;background:#808080;"></div>
<div style="left:944px;top:675px;width:1px;height:162px;background:#808080;"></div>
<div style="left:201px;top:695px;width:27px;height:19px;background:#c3c7f5;border-right:1px solid #2a3a9a;border-bottom:1px solid #2a3a9a;"></div>
<div style="left:201px;top:714px;width:27px;height:1px;background:#9d9a82;"></div>
<span style="left:210.88px;top:699.00px;font: normal 13px/1 'Liberation Sans',sans-serif;color:#000;">1</span>
<div style="left:229px;top:714px;width:1192px;height:1px;background:repeating-linear-gradient(90deg,#8a8a8a 0 1px,transparent 1px 2px);"></div>
<div style="left:201px;top:734px;width:27px;height:1px;background:#9d9a82;"></div>
<span style="left:210.88px;top:719.00px;font: normal 13px/1 'Liberation Sans',sans-serif;color:#000;">2</span>
<div style="left:229px;top:734px;width:1192px;height:1px;background:repeating-linear-gradient(90deg,#8a8a8a 0 1px,transparent 1px 2px);"></div>
<div style="left:201px;top:754px;width:27px;height:1px;background:#9d9a82;"></div>
<span style="left:210.88px;top:739.00px;font: normal 13px/1 'Liberation Sans',sans-serif;color:#000;">3</span>
<div style="left:229px;top:754px;width:1192px;height:1px;background:repeating-linear-gradient(90deg,#8a8a8a 0 1px,transparent 1px 2px);"></div>
<div style="left:201px;top:774px;width:27px;height:1px;background:#9d9a82;"></div>
<span style="left:210.88px;top:759.00px;font: normal 13px/1 'Liberation Sans',sans-serif;color:#000;">4</span>
<div style="left:229px;top:774px;width:1192px;height:1px;background:repeating-linear-gradient(90deg,#8a8a8a 0 1px,transparent 1px 2px);"></div>
<div style="left:201px;top:794px;width:27px;height:1px;background:#9d9a82;"></div>
<span style="left:210.88px;top:779.00px;font: normal 13px/1 'Liberation Sans',sans-serif;color:#000;">5</span>
<div style="left:229px;top:794px;width:1192px;height:1px;background:repeating-linear-gradient(90deg,#8a8a8a 0 1px,transparent 1px 2px);"></div>
<div style="left:201px;top:814px;width:27px;height:1px;background:#9d9a82;"></div>
<span style="left:210.88px;top:799.00px;font: normal 13px/1 'Liberation Sans',sans-serif;color:#000;">6</span>
<div style="left:229px;top:814px;width:1192px;height:1px;background:repeating-linear-gradient(90deg,#8a8a8a 0 1px,transparent 1px 2px);"></div>
<div style="left:201px;top:834px;width:27px;height:1px;background:#9d9a82;"></div>
<span style="left:210.88px;top:819.00px;font: normal 13px/1 'Liberation Sans',sans-serif;color:#000;">7</span>
<div style="left:229px;top:834px;width:1192px;height:1px;background:repeating-linear-gradient(90deg,#8a8a8a 0 1px,transparent 1px 2px);"></div>
<span style="left:240.65px;top:696.00px;font: normal 15px/1 'Liberation Serif',serif;color:#000;">1</span>
<span style="left:265.80px;top:696.00px;font: normal 15px/1 'Liberation Serif',serif;color:#000;letter-spacing:-0.129px;">M1435</span>
<span style="left:350.80px;top:696.00px;font: normal 15px/1 'Liberation Serif',serif;color:#000;letter-spacing:0.114px;">Máy trộn vữa 80l</span>
<span style="left:667.14px;top:696.00px;font: normal 15px/1 'Liberation Serif',serif;color:#000;">ca</span>
<span style="left:724.30px;top:696.00px;font: normal 15px/1 'Liberation Serif',serif;color:#000;letter-spacing:0.242px;">0,0250</span>
<span style="left:792.80px;top:696.00px;font: normal 15px/1 'Liberation Serif',serif;color:#000;letter-spacing:0.368px;">229.111,0</span>
<span style="left:879.60px;top:696.00px;font: normal 15px/1 'Liberation Serif',serif;color:#000;letter-spacing:0.368px;">229.111,0</span>
<div style="left:769px;top:695px;width:90px;height:21px;border:3px solid #000;border-top:none;"></div>
<div style="left:770px;top:695px;width:88px;height:20px;border:1px dotted #fff;border-top:none;"></div>
<div style="left:855px;top:712px;width:6px;height:6px;background:#000;border:1px solid #fff;"></div>
<div style="left:1422px;top:675px;width:15.5px;height:162px;background:#f0f0f0;"></div>
<div style="left:1422.5px;top:691px;width:14.5px;height:17px;background:#cdcdcd;"></div>
<svg style="left:1421.5px;top:675.5px" width="16" height="16" viewBox="-8 -8 16 16"><path d="M-3.4 1.75L0 -1.75L3.4 1.75" stroke="#606060" stroke-width="1.9" fill="none"/></svg>
<svg style="left:1421.5px;top:819.5px" width="16" height="16" viewBox="-8 -8 16 16"><path d="M-3.4 -1.75L0 1.75L3.4 -1.75" stroke="#606060" stroke-width="1.9" fill="none"/></svg>
<div style="left:1438px;top:89px;width:1px;height:749px;background:#fdfdfd;"></div>
<div style="left:1439px;top:89px;width:1px;height:749px;background:#dedede;"></div>
<div style="left:904px;top:838px;width:310px;height:22px;background:#f0f0f0;"></div>
<span style="left:925.00px;top:843.00px;font: normal 12.5px/1 'Liberation Sans',sans-serif;color:#000;letter-spacing:-0.165px;">Thông báo</span>
<span style="left:1020.20px;top:843.00px;font: normal 12.5px/1 'Liberation Sans',sans-serif;color:#000;letter-spacing:-0.415px;">Hỗ trợ từ xa</span>
<span style="left:1343.00px;top:839.00px;font: normal 15px/1 'Liberation Serif',serif;color:#0000ee;letter-spacing:-0.299px;text-decoration:underline;text-decoration-thickness:1px;text-underline-offset:2.5px;">Góp ý, báo lỗi...</span>
<div style="left:0px;top:860px;width:1440px;height:40px;background:#07090d;"></div>
<div style="left:48px;top:860px;width:344px;height:40px;background:#303030;"></div>
<svg style="left:16px;top:872px" width="17" height="17" viewBox="0 0 17 17"><path d="M0 2.400l6.900-1v6.600H0z M7.700 1.300L17 0v8H7.700z M0 8.800h6.900v6.600l-6.900-1z M7.700 8.800H17V17l-9.300-1.300z" fill="#fff"/></svg>
<svg style="left:57px;top:869px" width="22" height="22" viewBox="0 0 22 22"><circle cx="11" cy="11" r="8.700" stroke="#e8e8e8" stroke-width="2.600" fill="none"/></svg>
<span style="left:88.00px;top:872.00px;font: normal 16px/1 'Liberation Sans',sans-serif;color:#a2a2a2;letter-spacing:0.188px;">Type here to search</span>
<svg style="left:364px;top:870px" width="14" height="20" viewBox="0 0 14 20"><g stroke="#a0a0a0" fill="none" stroke-width="1.200"><rect x="4.500" y="1.500" width="5" height="10" rx="2.500"/><path d="M2 8.500v1.500a5 5 0 0 0 10 0v-1.500 M7 15v3.500 M4 18.500h6"/></g></svg>
<svg style="left:405px;top:872px" width="22" height="16" viewBox="0 0 22 16"><g stroke="#fff" fill="none" stroke-width="1.300"><rect x="4.700" y="1.600" width="12" height="12.600"/><path d="M3 3.500h-2v9h2 M18.500 3.500h2v9h-2"/></g></svg>
<svg style="left:455px;top:870px" width="23" height="20" viewBox="0 0 23 20"><path d="M1 1.500h6.500l1.500 1.800h13v15.200H1z" fill="#ffe694"/><path d="M1 1.500h6.500l1 1.200H1z" fill="#f8d775"/><rect x="2.300" y="2" width="4" height="1" fill="#fff8dc"/><path d="M1 17.500h21v1.300H1z" fill="#f3d06a"/><path d="M5 18.800v-6.600c0-1 0.800-1.700 1.700-1.700h9.600c1 0 1.700 0.700 1.700 1.700v6.600h-4v-4.600H9v4.600z" fill="#3aa5e6"/></svg>
<svg style="left:504px;top:868px" width="24" height="24" viewBox="0 0 24 24"><circle cx="12" cy="12" r="11.200" fill="#db4437"/><path d="M12 12L2.300 6.400A11.200 11.200 0 0 0 10 23l4.800-8.200z" fill="#0f9d58"/><path d="M12 12h11.200A11.200 11.200 0 0 1 10 23l5.500-9.500z" fill="#ffcd40"/><path d="M12 6.800h9.900a11.200 11.200 0 0 1 1.300 5.200l-6.700 2z" fill="#ffcd40"/><path d="M2.300 6.400A11.200 11.200 0 0 1 21.900 6.800H12l-4.600 3z" fill="#db4437"/><circle cx="12" cy="12" r="5.300" fill="#f4f4f4"/><circle cx="12" cy="12" r="4.200" fill="#4285f4"/></svg>
<svg style="left:553px;top:868px" width="24" height="24" viewBox="0 0 24 24"><rect x="10" y="3" width="13" height="17.500" fill="#fff" stroke="#2b579a" stroke-width="0.800"/><path d="M13 6h8M13 8.300h8M13 10.600h8M13 12.900h8M13 15.200h8M13 17.500h8" stroke="#2b579a" stroke-width="1.100"/><path d="M0.800 2.800l13.200-2.300v23l-13.200-2.300z" fill="#2b579a"/><path d="M3 8l1.500 8h1.600l1.300-5.600 1.300 5.600h1.600l1.500-8h-1.500l-0.900 5.600-1.300-5.600H6.700l-1.300 5.600-0.900-5.600z" fill="#fff"/></svg>
<svg style="left:602px;top:867px" width="24" height="25" viewBox="0 0 24 25"><defs><radialGradient id="ffx" cx="0.700" cy="0.150" r="0.950"><stop offset="0" stop-color="#fff44f"/><stop offset="0.350" stop-color="#ff980e"/><stop offset="0.700" stop-color="#ff3647"/><stop offset="1" stop-color="#e31587"/></radialGradient></defs><path d="M15.500 0.500c2 1.500 2.500 3 2.500 4.500 3 1.500 5.300 5 5.300 8.700 0 6-5 10.600-11.200 10.600S0.800 19.800 0.800 13.800c0-2.500 0.700-4.500 2-6.300 0.300-1.500 1-2.500 2-3.300 0 1 0.300 1.800 0.800 2.300C8 4.500 11 3.500 13.500 4c1-1 1.800-2.300 2-3.500z" fill="url(#ffx)"/><path d="M7 8.500c2.500-1.700 6-1.500 8 0.500 2 2 2.300 5.500 0.500 7.700-1.800 2.200-5.300 2.600-7.500 1.300 2 0.200 3.500-0.500 4-1.500-1.500 0.500-3.500-0.300-4-1.800 1 0.500 2.500 0.300 3-0.500-1.500 0-2.800-1-3-2.500 1 0.300 2 0.200 2.500-0.300-1.500-0.300-3-1.400-3.500-2.900z" fill="#2b4fd8"/><path d="M15.500 0.500c2 1.500 2.500 3 2.500 4.500 1.500 0.800 2.800 2 3.700 3.500-0.500-3-2.500-6-6.200-8z" fill="#ffe33a"/></svg>
<svg style="left:651px;top:870px" width="23" height="19" viewBox="0 0 23 19"><rect x="0.500" y="0.500" width="22" height="18" fill="#f2f2f4" stroke="#d0d0d4"/><defs><linearGradient id="gp" x1="0" y1="0" x2="0.600" y2="1"><stop offset="0" stop-color="#7fa2b8"/><stop offset="1" stop-color="#3d9a52"/></linearGradient></defs><rect x="2.500" y="3.500" width="9" height="12.500" fill="url(#gp)" stroke="#c4ccd8" stroke-width="0.800"/><path d="M13.500 5h4M13.500 8h4M13.500 11h4M13.500 14.500h6" stroke="#c8c8cc" stroke-width="1.400"/><rect x="19" y="3" width="1.600" height="8" fill="#3a78c8"/><path d="M17 1.500h4" stroke="#9a9aa0"/></svg>
<div style="left:688px;top:860px;width:48px;height:40px;background:#323539;"></div>
<svg style="left:700px;top:868px" width="24" height="24" viewBox="0 0 24 24"><rect x="0.800" y="0.800" width="22" height="22.400" fill="#4a9a5a" stroke="#3a8048" stroke-width="0.800"/><rect x="2.600" y="2.600" width="18.400" height="18.800" fill="#f6faf6"/><path d="M4.800 3.800h13.600v5h-0.900l-1-3.200H8.600l5.400 6.400-5.900 7.200h8.600l1.200-3.300h0.900V21H4.800v-1l6.300-7.600-6.300-7.600z" fill="#2f7a3f"/></svg>
<svg style="left:751px;top:867px" width="21" height="26" viewBox="0 0 21 26"><path d="M3.500 1.500c2-1 4.500-1 6.500 0l-2.200 5c-2-1-4.500-1-6.500 0z" fill="#f25a14"/><path d="M11 2.200c2 1 4.500 1 6.800 0l-2.200 5.300c-2.300 1-4.800 1-6.800 0z" fill="#7db428"/><path d="M2.800 9.300c2-1 4.500-1 6.500 0l-2.300 5.300c-2-1-4.500-1-6.500 0z" fill="#1a3cb8"/><path d="M10.300 10.200c2 1 4.500 1 6.800 0l-2.200 5.300c-2.300 1-4.800 1-6.800 0z" fill="#f5dc14"/></svg>
<span style="left:755.00px;top:886.00px;font: bold 8px/1 'Liberation Sans',sans-serif;color:#1030c0;letter-spacing:1.664px;">DT</span>
<svg style="left:797px;top:867px" width="26" height="26" viewBox="0 0 26 26"><circle cx="13" cy="12.500" r="9.600" fill="#00aff0"/><circle cx="7.500" cy="6.500" r="5.600" fill="#00aff0"/><circle cx="18.500" cy="18.500" r="5.600" fill="#00aff0"/><path d="M16.800 9.200c-0.800-1.500-2.300-2.100-4-2.100-2.200 0-4 1-4 3 0 4 6.200 2.300 6.200 4.700 0 0.900-0.900 1.400-2.200 1.400-1.500 0-2.400-0.700-3-1.900" stroke="#fff" stroke-width="2.300" fill="none" stroke-linecap="round"/></svg>
<svg style="left:849px;top:868px" width="20" height="23" viewBox="0 0 20 23"><defs><linearGradient id="dbt" x1="0" y1="0" x2="1" y2="0"><stop offset="0" stop-color="#8a8a8a"/><stop offset="0.350" stop-color="#f0f0f0"/><stop offset="0.650" stop-color="#c8c8c8"/><stop offset="1" stop-color="#7c7c7c"/></linearGradient></defs><path d="M1 4v15c0 2 4 3.300 9 3.300s9-1.300 9-3.300V4z" fill="url(#dbt)"/><ellipse cx="10" cy="4" rx="9" ry="3.200" fill="#d4d4d4" stroke="#a8a8a8" stroke-width="0.600"/><path d="M1 9c0 2 4 3.300 9 3.300s9-1.300 9-3.300 M1 14.200c0 2 4 3.300 9 3.300s9-1.300 9-3.300" fill="none" stroke="#6e6e6e" stroke-width="1.100"/></svg>
<svg style="left:895px;top:867px" width="25" height="26" viewBox="0 0 25 26"><path d="M12 5c6 0 10.500 3 10.500 8s-4 9-10 9c-2 0-3-0.500-3.200-1.800-0.200-1.500 1-2 0.600-3-0.500-1.200-2.600-0.200-5.400-0.500C2 16.500 1 14.800 1 12.500 1 8 6 5 12 5z" fill="#c4dcf0" stroke="#88b0d0" stroke-width="0.700"/><circle cx="4.800" cy="12.300" r="1.900" fill="#e8442e"/><circle cx="8.600" cy="8.600" r="1.900" fill="#5cb82e"/><circle cx="13.800" cy="7.300" r="1.900" fill="#f0a81e"/><circle cx="11.300" cy="14.800" r="1.700" fill="#0a0c10"/><path d="M20.500 4.500L12.500 24" stroke="#e88a28" stroke-width="1.600" stroke-linecap="round"/><path d="M19 1l3.500 0.500 0.800 2-2.500 2.500-2-1z" fill="#e8b88a"/></svg>
<div style="left:496px;top:898px;width:40px;height:2px;background:#76b9ed;"></div>
<div style="left:545px;top:898px;width:40px;height:2px;background:#76b9ed;"></div>
<div style="left:643px;top:898px;width:40px;height:2px;background:#76b9ed;"></div>
<div style="left:688px;top:898px;width:48px;height:2px;background:#76b9ed;"></div>
<div style="left:741px;top:898px;width:40px;height:2px;background:#76b9ed;"></div>
<div style="left:790px;top:898px;width:40px;height:2px;background:#76b9ed;"></div>
<div style="left:839px;top:898px;width:40px;height:2px;background:#76b9ed;"></div>
<div style="left:888px;top:898px;width:40px;height:2px;background:#76b9ed;"></div>
<svg style="left:1196px;top:872px" width="14" height="10" viewBox="0 0 14 10"><path d="M1.500 8l5.500-5.500 5.500 5.500" stroke="#fff" stroke-width="1.300" fill="none"/></svg>
<svg style="left:1218px;top:872px" width="19" height="14" viewBox="0 0 19 14"><g stroke="#fff" fill="none" stroke-width="1.100"><rect x="6.500" y="4" width="10" height="7.500"/><path d="M16.500 6v3.500h1.500v-3.500z M3 1.500v2.500 M5 1.500v2.500 M1.800 4h4.400v2.500c0 1-0.800 1.800-2.200 1.800s-2.200-0.800-2.200-1.800z M4 8.300v2c0 1 0.600 1.500 1.500 1.500"/></g></svg>
<svg style="left:1244px;top:871px" width="18" height="16" viewBox="0 0 18 16"><g stroke="#fff" fill="none" stroke-width="1.200"><path d="M2.500 14C3 8 8 3.500 14.500 3" opacity="0.550"/><path d="M5.800 14C6.200 10 9.500 7 14.500 6.500" opacity="0.800"/><path d="M9 14c0.300-2.500 2.300-4.300 5.500-4.500"/></g><circle cx="13.300" cy="13.300" r="1.500" fill="#fff"/></svg>
<svg style="left:1266px;top:871px" width="19" height="17" viewBox="0 0 19 17"><g stroke="#fff" fill="none" stroke-width="1.100"><path d="M1.500 6h2.800l3.700-3.500v12L4.300 11H1.500z"/><path d="M10.500 6c1 1.500 1 3.500 0 5 M13 4c1.800 2.700 1.800 6.300 0 9 M15.500 2.500c2.500 3.600 2.500 8.400 0 12"/></g></svg>
<span style="left:1293.00px;top:875.00px;font: normal 11.5px/1 'Liberation Sans',sans-serif;color:#fff;letter-spacing:-0.641px;">ENG</span>
<span style="left:1333.50px;top:865.00px;font: normal 12px/1 'Liberation Sans',sans-serif;color:#fff;letter-spacing:-0.116px;">1:11 PM</span>
<span style="left:1331.50px;top:883.00px;font: normal 12px/1 'Liberation Sans',sans-serif;color:#fff;letter-spacing:0.035px;">2/7/2018</span>
<svg style="left:1398px;top:870px" width="18" height="18" viewBox="0 0 18 18"><path d="M1.500 2h15v11h-5l-2.500 2.800-2.500-2.800h-5z" stroke="#fff" stroke-width="1.200" fill="none"/></svg>
<div style="left:1435px;top:860px;width:1px;height:40px;background:#5a5a5a;"></div>
<svg style="left:12px;top:47px" width="17" height="17" viewBox="0 0 17 17"><defs><linearGradient id="npw" x1="0" y1="0" x2="1" y2="1"><stop offset="0" stop-color="#ffffff"/><stop offset="1" stop-color="#c4d4f0"/></linearGradient><linearGradient id="npy" x1="0" y1="0" x2="0" y2="1"><stop offset="0" stop-color="#fff2a0"/><stop offset="1" stop-color="#f0a818"/></linearGradient></defs><rect x="0.500" y="1.300" width="15.300" height="12.200" fill="url(#npw)" stroke="#34507e" stroke-width="0.900"/><rect x="0.800" y="1.600" width="2.400" height="11.600" fill="url(#npy)"/><rect x="7" y="1.500" width="8.500" height="2.600" fill="#3f7fe8"/><rect x="2.600" y="7.600" width="7" height="8.300" rx="0.600" fill="#f4f7ff" stroke="#34507e" stroke-width="0.900"/><path d="M4.200 10h3.800M4.200 12h3.800M4.200 14h3.800" stroke="#3c78e8" stroke-width="0.900"/><path d="M3.600 0v7.200M0 3.600h7.200M1 1l5.200 5.200M6.200 1L1 6.200" stroke="#f4c820" stroke-width="1.100"/><circle cx="3.600" cy="3.600" r="1.300" fill="#fffbe0"/></svg>
<svg style="left:34px;top:47px" width="17" height="17" viewBox="0 0 17 17"><path d="M1 5.500h5l1.500 1.500h6v9h-12.500z" fill="#e9b85a" stroke="#b48a3c" stroke-width="0.800"/><path d="M3.500 9.500h13l-3 6.500h-12.500z" fill="#fbe26a" stroke="#c09a36" stroke-width="0.800"/><path d="M8.500 3.500c2-2.500 5-2 6 0.500" stroke="#5a7f94" fill="none" stroke-width="1.100"/><path d="M15.600 2l-0.400 3.200-2.800-1z" fill="#3f8a7a"/></svg>
<svg style="left:56.5px;top:54px" width="5" height="3" viewBox="0 0 5 3"><path d="M0 0h5l-2.500 3z" fill="#000"/></svg>
<svg style="left:272.5px;top:54px" width="5" height="3" viewBox="0 0 5 3"><path d="M0 0h5l-2.500 3z" fill="#000"/></svg>
<svg style="left:305px;top:54px" width="5" height="3" viewBox="0 0 5 3"><path d="M0 0h5l-2.500 3z" fill="#000"/></svg>
<svg style="left:74px;top:48px" width="15" height="15" viewBox="0 0 15 15"><rect x="0.500" y="0.500" width="14" height="14" rx="1" fill="#b9b9b9" stroke="#a6a6a6"/><rect x="3" y="1" width="9" height="6.500" fill="#e2e2e2"/><rect x="4" y="9.500" width="8" height="5" fill="#9e9e9e"/><rect x="5.500" y="10.500" width="2.500" height="3.500" fill="#d0d0d0"/></svg>
<svg style="left:96px;top:47px" width="17" height="17" viewBox="0 0 17 17"><rect x="0.500" y="0.500" width="16" height="16" fill="#4a9a4a" stroke="#2c6c2c"/><rect x="2.200" y="2.200" width="12.600" height="12.600" fill="#f4f8f2"/><path d="M2.500 11.500h12v3h-12z" fill="#dfeadc"/><path d="M4.200 4.500l3.400 4-3.600 4.300h2.500l2.300-2.900 2.300 2.900h2.500L10 8.500l3.400-4h-2.500L8.800 7 6.700 4.500z" fill="#2f9a3a" stroke="#1f6a28" stroke-width="0.500"/></svg>
<svg style="left:126px;top:48px" width="17" height="16" viewBox="0 0 17 16"><path d="M1.500 0.500h7l3 3v10.500h-10z" fill="#fdfdfd" stroke="#6a7fae"/><path d="M1.500 14.500h10" stroke="#2c4a8c" stroke-width="1.300"/><circle cx="8.500" cy="8" r="3.300" fill="#e6eefc" fill-opacity="0.900" stroke="#8a94a8" stroke-width="1.200"/><path d="M11 10.500l3.500 3.500" stroke="#e8943a" stroke-width="2.600" stroke-linecap="round"/></svg>
<svg style="left:156px;top:48px" width="11" height="15" viewBox="0 0 11 15"><path d="M2.500 0l3.300 8.500M8.500 0l-3.300 8.500" stroke="#7e8796" stroke-width="1.500"/><ellipse cx="2.700" cy="11.300" rx="1.900" ry="2.600" fill="none" stroke="#2c5fd0" stroke-width="1.600" transform="rotate(20 2.700 11.300)"/><ellipse cx="8.300" cy="11.300" rx="1.900" ry="2.600" fill="none" stroke="#2c5fd0" stroke-width="1.600" transform="rotate(-20 8.300 11.300)"/></svg>
<svg style="left:177px;top:48px" width="16" height="14" viewBox="0 0 16 14"><path d="M0.500 0.500h5l2.500 2.500v6.500h-7.500z" fill="#fafcff" stroke="#5a7cc4"/><path d="M2 3.500h3M2 5.500h4.500M2 7.500h4.500" stroke="#6aa0ea"/><path d="M6.500 4.500h5l3 3v6h-8z" fill="#fafcff" stroke="#2f57b0"/><path d="M8 8.500h3M8 10.500h5M8 12.500h5" stroke="#3f80e0"/></svg>
<svg style="left:200px;top:47px" width="17" height="16" viewBox="0 0 17 16"><rect x="0.500" y="2.500" width="11.500" height="12" rx="1" fill="#e9b030" stroke="#a87818"/><rect x="3.500" y="0.800" width="5.500" height="3.200" rx="0.800" fill="#d8d8d8" stroke="#6c6c6c" stroke-width="0.800"/><path d="M6.500 7.500h7l2.500 2.500v5h-9.500z" fill="#f0f2f6" stroke="#3c3c4c"/><path d="M8 10.500h4M8 12.500h6" stroke="#8a92a4"/></svg>
<svg style="left:223px;top:46px" width="17" height="17" viewBox="0 0 17 17"><path d="M12.500 1.200c1-1 2.600-0.200 2.200 1.200l-2.600 5.200-2.400-1.400z" fill="#c98a3a" stroke="#9a6420" stroke-width="0.600"/><path d="M8.600 6.400l4 2.200" stroke="#8a4aa0" stroke-width="1.300"/><path d="M8.300 7l4 2.300c0.800 2.600 0.200 5.300-0.800 7.200l-3.200-0.600-0.600-1-1.300 0.800-2.600-1-0.400-1.200-1.700 0.100-1.500-1.500c3-1.200 6-3 8.100-5.100z" fill="#e8d02c" stroke="#b89c18" stroke-width="0.600"/></svg>
<svg style="left:252px;top:47px" width="14" height="15" viewBox="0 0 14 15"><path d="M5 7.500c1.500-3 6-3 7 0.500s-1 6-3.500 6.500" fill="none" stroke="#3f7de0" stroke-width="2.600"/><path d="M0.800 3.500l0.800 6.500 6-2.800z" fill="#3f7de0"/></svg>
<svg style="left:283px;top:47px" width="14" height="15" viewBox="0 0 14 15"><path d="M9 7.500c-1.500-3-6-3-7 0.500s1 6 3.500 6.500" fill="none" stroke="#c2c2c2" stroke-width="2.600"/><path d="M13.200 3.500l-0.800 6.500-6-2.800z" fill="#c2c2c2"/></svg>
<svg style="left:322px;top:48px" width="17" height="15" viewBox="0 0 17 15"><defs><linearGradient id="fw" x1="0" y1="0" x2="1" y2="1"><stop offset="0" stop-color="#8fd0ff"/><stop offset="1" stop-color="#1f78e8"/></linearGradient></defs><path d="M0.800 0.800l7.400 6.700-7.400 6.700z" fill="url(#fw)" stroke="#1a4fc0" stroke-width="1.100"/><path d="M7.600 0.800l8.400 6.700-8.400 6.700v-2.500l5-4.200-5-4.200z" fill="url(#fw)" stroke="#1a4fc0" stroke-width="1.100"/></svg>
<svg style="left:350px;top:47px" width="17" height="17" viewBox="0 0 17 17"><defs><linearGradient id="fl" x1="0" y1="0" x2="1" y2="1"><stop offset="0" stop-color="#e8341c"/><stop offset="1" stop-color="#ffb028"/></linearGradient></defs><path d="M0.800 1l5.500 4.500 1.200-1.800 4 4.800 2.300-1.600 0.600 8.400-8.200-1.300 2-1.700-4.300-2.200 1.600-1.300z" fill="url(#fl)" stroke="#e86a1c" stroke-width="0.600"/></svg>
<svg style="left:582px;top:46px" width="14" height="18" viewBox="0 0 14 18"><path d="M8 0l-4 7h3l-2 5 6-7.500h-3.200l2.600-4.500z" fill="#3f9af0" stroke="#2a78d8" stroke-width="0.500"/><rect x="0.700" y="11.500" width="12" height="5" rx="1.200" fill="#e4e4e4" stroke="#8a8a8a" stroke-width="0.900"/><circle cx="10.500" cy="14" r="0.900" fill="#3fd04a"/></svg>
<svg style="left:915px;top:47px" width="16" height="16" viewBox="0 0 16 16"><defs><linearGradient id="rfg" x1="0" y1="0" x2="0" y2="1"><stop offset="0" stop-color="#86e480"/><stop offset="1" stop-color="#1f9a2c"/></linearGradient></defs><path d="M4.300 7.300A4.700 4.700 0 1 1 9 12.200" fill="none" stroke="#238f2e" stroke-width="3.800"/><path d="M4.300 7.300A4.700 4.700 0 1 1 9 12.200" fill="none" stroke="url(#rfg)" stroke-width="2.800"/><path d="M9 12.200A4.700 4.700 0 0 1 5.200 10.300" fill="none" stroke="#2fae3a" stroke-width="2.800"/><path d="M0.600 8h7.200l-1.600 2.500-2.200 3.300-3.400 1.900z" fill="#3cc046" stroke="#238f2e" stroke-width="0.600"/></svg>
<svg style="left:9px;top:94px" width="17" height="16" viewBox="0 0 17 16"><rect x="2.500" y="0.500" width="13" height="11" fill="#f0f2fa" stroke="#7f8db4"/><rect x="3" y="1" width="12" height="2.200" fill="#5c8ce8"/><rect x="11" y="4" width="4" height="7" fill="#fff" stroke="#c8cce0" stroke-width="0.600"/><rect x="0.500" y="4.500" width="8" height="10" rx="0.800" fill="#f6f8ff" stroke="#3f568c"/><rect x="1" y="5" width="3" height="9" fill="#f4d46a"/><path d="M4.500 7.500h3M4.500 9.500h3M4.500 11.500h3" stroke="#3c6fe0"/></svg>
<svg style="left:28px;top:113px" width="16" height="14" viewBox="0 0 16 14"><defs><linearGradient id="fo" x1="0" y1="0" x2="0" y2="1"><stop offset="0" stop-color="#fff2b8"/><stop offset="1" stop-color="#e0a83a"/></linearGradient></defs><path d="M0.500 1.500h5l1.500 1.500h7.500v10h-14z" fill="url(#fo)" stroke="#b08a3a" stroke-width="0.800"/><path d="M0.500 13h14.500" stroke="#3a2a10" stroke-width="1"/><path d="M14.800 3.500v9.500" stroke="#6a4a1a" stroke-width="0.800"/></svg>
<svg style="left:29px;top:132px" width="16" height="15" viewBox="0 0 16 15"><path d="M0.500 0.500h8l3 3v11h-11z" fill="#eef3fb" stroke="#7f93b8"/><path d="M2 3.500h5M2 5.500h7M2 7.500h7M2 9.500h4" stroke="#9ab0d4"/><path d="M4.500 12.500l1-3 6.500-6.500 2 2-6.500 6.500z" fill="#f0d23a" stroke="#8a6a18" stroke-width="0.700"/><path d="M11.300 3.700l1.200-1.200 2 2-1.200 1.200z" fill="#e86a5a"/><path d="M12.500 12.500l2.500-1.200v2.400z" fill="#2fae3a"/></svg>
<svg style="left:28px;top:148px" width="16" height="16" viewBox="0 0 16 16"><path d="M1.500 0.500h8.500l4.500 4.500v10.500h-13z" fill="#fbfbfb" stroke="#5c5c5c"/><path d="M10 0.500v4.500h4.500" fill="#e4e4e4" stroke="#5c5c5c"/><path d="M3.500 4.500h5M3.500 6.500h9M3.500 8.500h9M3.500 10.500h9M3.500 12.500h9" stroke="#8a8a8a"/></svg>
<svg style="left:28px;top:166px" width="16" height="16" viewBox="0 0 16 16"><path d="M1.500 0.500h8.500l4.500 4.500v10.500h-13z" fill="#fbfbfb" stroke="#5c5c5c"/><path d="M10 0.500v4.500h4.500" fill="#e4e4e4" stroke="#5c5c5c"/><path d="M3.500 4.500h5M3.500 6.500h9M3.500 8.500h9M3.500 10.500h9M3.500 12.500h9" stroke="#8a8a8a"/></svg>
<svg style="left:28px;top:184px" width="16" height="16" viewBox="0 0 16 16"><path d="M1.500 0.500h8.500l4.500 4.500v10.500h-13z" fill="#fbfbfb" stroke="#5c5c5c"/><path d="M10 0.500v4.500h4.500" fill="#e4e4e4" stroke="#5c5c5c"/><path d="M3.500 4.500h5M3.500 6.500h9M3.500 8.500h9M3.500 10.500h9M3.500 12.500h9" stroke="#8a8a8a"/></svg>
<svg style="left:28px;top:202px" width="16" height="16" viewBox="0 0 16 16"><path d="M1.500 0.500h8.500l4.500 4.500v10.500h-13z" fill="#fbfbfb" stroke="#5c5c5c"/><path d="M10 0.500v4.500h4.500" fill="#e4e4e4" stroke="#5c5c5c"/><path d="M3.500 4.500h5M3.500 6.500h9M3.500 8.500h9M3.500 10.500h9M3.500 12.500h9" stroke="#8a8a8a"/></svg>
<svg style="left:28px;top:220px" width="16" height="16" viewBox="0 0 16 16"><rect x="0.500" y="0.500" width="15" height="14.500" fill="#f7fbff" stroke="#2f86c8" stroke-width="1.200"/><path d="M1.500 3.500h13M1.500 6.500h13M1.500 9.500h13" stroke="#cfe2f4" stroke-dasharray="1.500 1"/><path d="M1.500 12.500h13" stroke="#f0b428" stroke-width="1.200"/><path d="M4.500 2.500h6.500v2.300h-0.800l-0.400-1.200H6.800l2.500 3.200-2.600 3.400h3.200l0.500-1.400h0.800v2.500H4.500v-0.700l2.900-3.700-2.900-3.700z" fill="#333"/></svg>
<svg style="left:28px;top:238px" width="17" height="16" viewBox="0 0 17 16"><path d="M1.500 0.500h10.500v15h-10.500z" fill="#3f8ce0" stroke="#2a62b0"/><path d="M3.500 0.500v15" stroke="#8cc0f4" stroke-width="1.200"/><rect x="5.500" y="2.500" width="5" height="4" fill="#e8f2fc"/><path d="M6 4.500h4" stroke="#6aa4e4"/><path d="M7.500 15.500l1-2.600 6-6 1.800 1.800-6 6z" fill="#f4a83a" stroke="#a86a18" stroke-width="0.600"/><path d="M14 7.400l1.200-1.200 1.600 1.600-1.200 1.200z" fill="#e88ab0"/></svg>
<svg style="left:906.5px;top:841.5px" width="15" height="15" viewBox="0 0 16 16"><defs><linearGradient id="rfg" x1="0" y1="0" x2="0" y2="1"><stop offset="0" stop-color="#86e480"/><stop offset="1" stop-color="#1f9a2c"/></linearGradient></defs><path d="M4.300 7.300A4.700 4.700 0 1 1 9 12.200" fill="none" stroke="#238f2e" stroke-width="3.800"/><path d="M4.300 7.300A4.700 4.700 0 1 1 9 12.200" fill="none" stroke="url(#rfg)" stroke-width="2.800"/><path d="M9 12.200A4.700 4.700 0 0 1 5.200 10.300" fill="none" stroke="#2fae3a" stroke-width="2.800"/><path d="M0.600 8h7.200l-1.600 2.500-2.200 3.300-3.400 1.900z" fill="#3cc046" stroke="#238f2e" stroke-width="0.600"/></svg>
<svg style="left:1002px;top:841px" width="14" height="16" viewBox="0 0 14 16"><rect x="0.500" y="0.500" width="13" height="15" rx="1.500" fill="#1c8ce0" stroke="#1468b8"/><circle cx="7" cy="8" r="4.500" fill="#fff"/><path d="M4 8h6M5.500 6.300l-1.700 1.700 1.700 1.700M8.500 6.300l1.700 1.700-1.700 1.700" stroke="#1c7cd0" stroke-width="1.200" fill="none"/></svg>
<div style="left:449px;top:174px;width:541px;height:510px;background:#fff;border:1px solid #1883d7;box-shadow:0 3px 14px 2px rgba(0,0,0,0.35);"></div>
<span style="left:453.00px;top:179.00px;font: normal 12px/1 'Liberation Sans',sans-serif;color:#000;letter-spacing:-0.007px;">Tải đơn giá</span>
<svg style="left:971px;top:179px" width="12" height="12" viewBox="0 0 12 12"><path d="M1 1l10 10M11 1L1 11" stroke="#111" stroke-width="1.100"/></svg>
<span style="left:461.50px;top:207.00px;font: bold 20px/1 'Liberation Serif',serif;color:#6e6e6e;letter-spacing:0.199px;">Tải đơn giá từ Internet</span>
<div style="left:450px;top:242px;width:539px;height:1px;background:#828282;"></div>
<div style="left:454px;top:243px;width:518px;height:398px;background:#fff;border-left:1px solid #c8c8c8;border-right:1px solid #c8c8c8;"></div>
<div style="left:455px;top:249px;width:516px;height:1px;background:#c8c8c8;"></div>
<div style="left:907px;top:243px;width:56px;height:4px;background:#e1e1e1;border:1px solid #adadad;border-top:none;"></div>
<div style="left:0;top:0;width:1440px;height:900px;clip-path:inset(243px 0 651px 0);">
<svg style="left:463.5px;top:229.5px" width="18" height="17" viewBox="0 0 18 17"><defs><linearGradient id="dbg" x1="0" y1="0" x2="1" y2="0"><stop offset="0" stop-color="#98a4b0"/><stop offset="0.400" stop-color="#dfe5ea"/><stop offset="1" stop-color="#8e9aa6"/></linearGradient></defs><path d="M0.500 9.600v3c0 1.600 2.900 2.500 6.300 2.500s6.300-0.900 6.300-2.500v-3z" fill="url(#dbg)" stroke="#a2acb6" stroke-width="0.500"/><path d="M0.500 8.200c0 1.600 2.900 2.600 6.300 2.600s6.300-1 6.300-2.600" fill="#d4dbe2" stroke="#8c98a4" stroke-width="0.800"/><path d="M0.500 3.200v4.700c0 1.600 2.900 2.500 6.300 2.500s6.300-0.900 6.300-2.500V3.200z" fill="url(#dbg)" stroke="#a2acb6" stroke-width="0.500"/><ellipse cx="6.800" cy="3.200" rx="6.300" ry="2.500" fill="#dfe5ea" stroke="#9aa6b2" stroke-width="0.800"/><path d="M14.200 5l-4.600 5.400h2.700l-2.800 5.800 7.400-7.700h-3l3-3.500z" fill="#f8cc3c" stroke="#e08a14" stroke-width="0.900" stroke-linejoin="round"/></svg>
<span style="left:629.40px;top:230.00px;font: normal 14.5px/1 'Liberation Serif',serif;color:#008000;letter-spacing:0.216px;">(Đã có)</span>
</div>
<div style="left:455px;top:275px;width:516px;height:1px;background:#c8c8c8;"></div>
<svg style="left:463.5px;top:255.5px" width="18" height="17" viewBox="0 0 18 17"><defs><linearGradient id="dbg" x1="0" y1="0" x2="1" y2="0"><stop offset="0" stop-color="#98a4b0"/><stop offset="0.400" stop-color="#dfe5ea"/><stop offset="1" stop-color="#8e9aa6"/></linearGradient></defs><path d="M0.500 9.600v3c0 1.600 2.900 2.500 6.300 2.500s6.300-0.900 6.300-2.500v-3z" fill="url(#dbg)" stroke="#a2acb6" stroke-width="0.500"/><path d="M0.500 8.200c0 1.600 2.900 2.600 6.300 2.600s6.300-1 6.300-2.600" fill="#d4dbe2" stroke="#8c98a4" stroke-width="0.800"/><path d="M0.500 3.200v4.700c0 1.600 2.900 2.500 6.300 2.500s6.300-0.900 6.300-2.500V3.200z" fill="url(#dbg)" stroke="#a2acb6" stroke-width="0.500"/><ellipse cx="6.800" cy="3.200" rx="6.300" ry="2.500" fill="#dfe5ea" stroke="#9aa6b2" stroke-width="0.800"/><path d="M14.200 5l-4.600 5.400h2.700l-2.800 5.800 7.400-7.700h-3l3-3.500z" fill="#f8cc3c" stroke="#e08a14" stroke-width="0.900" stroke-linejoin="round"/></svg>
<span style="left:489.50px;top:255.00px;font: normal 14.5px/1 'Liberation Serif',serif;color:#000;letter-spacing:-0.173px;">Thi nghiệm VL</span>
<span style="left:629.40px;top:256.00px;font: normal 14.5px/1 'Liberation Serif',serif;color:#008000;letter-spacing:0.216px;">(Đã có)</span>
<div style="left:907px;top:253px;width:56px;height:19px;background:#e1e1e1;border:1px solid #adadad;"></div>
<span style="left:919.20px;top:258.00px;font: normal 11.5px/1 'Liberation Sans',sans-serif;color:#000;letter-spacing:-0.388px;">Tải về</span>
<div style="left:455px;top:301px;width:516px;height:1px;background:#c8c8c8;"></div>
<svg style="left:463.5px;top:281.5px" width="18" height="17" viewBox="0 0 18 17"><defs><linearGradient id="dbg" x1="0" y1="0" x2="1" y2="0"><stop offset="0" stop-color="#98a4b0"/><stop offset="0.400" stop-color="#dfe5ea"/><stop offset="1" stop-color="#8e9aa6"/></linearGradient></defs><path d="M0.500 9.600v3c0 1.600 2.900 2.500 6.300 2.500s6.300-0.900 6.300-2.500v-3z" fill="url(#dbg)" stroke="#a2acb6" stroke-width="0.500"/><path d="M0.500 8.200c0 1.600 2.900 2.600 6.300 2.600s6.300-1 6.300-2.600" fill="#d4dbe2" stroke="#8c98a4" stroke-width="0.800"/><path d="M0.500 3.200v4.700c0 1.600 2.900 2.500 6.300 2.500s6.300-0.900 6.300-2.500V3.200z" fill="url(#dbg)" stroke="#a2acb6" stroke-width="0.500"/><ellipse cx="6.800" cy="3.200" rx="6.300" ry="2.500" fill="#dfe5ea" stroke="#9aa6b2" stroke-width="0.800"/><path d="M14.200 5l-4.600 5.400h2.700l-2.800 5.800 7.400-7.700h-3l3-3.500z" fill="#f8cc3c" stroke="#e08a14" stroke-width="0.900" stroke-linejoin="round"/></svg>
<span style="left:489.50px;top:281.00px;font: normal 14.5px/1 'Liberation Serif',serif;color:#000;letter-spacing:-0.080px;">Thủy Điện</span>
<span style="left:629.40px;top:282.00px;font: normal 14.5px/1 'Liberation Serif',serif;color:#008000;letter-spacing:0.216px;">(Đã có)</span>
<div style="left:907px;top:279px;width:56px;height:19px;background:#e1e1e1;border:1px solid #adadad;"></div>
<span style="left:919.20px;top:284.00px;font: normal 11.5px/1 'Liberation Sans',sans-serif;color:#000;letter-spacing:-0.388px;">Tải về</span>
<div style="left:455px;top:327px;width:516px;height:1px;background:#c8c8c8;"></div>
<svg style="left:463.5px;top:307.5px" width="18" height="17" viewBox="0 0 18 17"><defs><linearGradient id="dbg" x1="0" y1="0" x2="1" y2="0"><stop offset="0" stop-color="#98a4b0"/><stop offset="0.400" stop-color="#dfe5ea"/><stop offset="1" stop-color="#8e9aa6"/></linearGradient></defs><path d="M0.500 9.600v3c0 1.600 2.900 2.500 6.300 2.500s6.300-0.900 6.300-2.500v-3z" fill="url(#dbg)" stroke="#a2acb6" stroke-width="0.500"/><path d="M0.500 8.200c0 1.600 2.900 2.600 6.300 2.600s6.300-1 6.300-2.600" fill="#d4dbe2" stroke="#8c98a4" stroke-width="0.800"/><path d="M0.500 3.200v4.700c0 1.600 2.900 2.500 6.300 2.500s6.300-0.900 6.300-2.500V3.200z" fill="url(#dbg)" stroke="#a2acb6" stroke-width="0.500"/><ellipse cx="6.800" cy="3.200" rx="6.300" ry="2.500" fill="#dfe5ea" stroke="#9aa6b2" stroke-width="0.800"/><path d="M14.200 5l-4.600 5.400h2.700l-2.800 5.800 7.400-7.700h-3l3-3.500z" fill="#f8cc3c" stroke="#e08a14" stroke-width="0.900" stroke-linejoin="round"/></svg>
<span style="left:489.50px;top:307.00px;font: normal 14.5px/1 'Liberation Serif',serif;color:#000;letter-spacing:-0.284px;">Thủy lợi</span>
<span style="left:629.40px;top:308.00px;font: normal 14.5px/1 'Liberation Serif',serif;color:#008000;letter-spacing:0.216px;">(Đã có)</span>
<div style="left:907px;top:305px;width:56px;height:19px;background:#e1e1e1;border:1px solid #adadad;"></div>
<span style="left:919.20px;top:310.00px;font: normal 11.5px/1 'Liberation Sans',sans-serif;color:#000;letter-spacing:-0.388px;">Tải về</span>
<div style="left:455px;top:353px;width:516px;height:1px;background:#c8c8c8;"></div>
<svg style="left:463.5px;top:333.5px" width="18" height="17" viewBox="0 0 18 17"><defs><linearGradient id="dbg" x1="0" y1="0" x2="1" y2="0"><stop offset="0" stop-color="#98a4b0"/><stop offset="0.400" stop-color="#dfe5ea"/><stop offset="1" stop-color="#8e9aa6"/></linearGradient></defs><path d="M0.500 9.600v3c0 1.600 2.900 2.500 6.300 2.500s6.300-0.900 6.300-2.500v-3z" fill="url(#dbg)" stroke="#a2acb6" stroke-width="0.500"/><path d="M0.500 8.200c0 1.600 2.900 2.600 6.300 2.600s6.300-1 6.300-2.600" fill="#d4dbe2" stroke="#8c98a4" stroke-width="0.800"/><path d="M0.500 3.200v4.700c0 1.600 2.900 2.500 6.300 2.500s6.300-0.900 6.300-2.500V3.200z" fill="url(#dbg)" stroke="#a2acb6" stroke-width="0.500"/><ellipse cx="6.800" cy="3.200" rx="6.300" ry="2.500" fill="#dfe5ea" stroke="#9aa6b2" stroke-width="0.800"/><path d="M14.200 5l-4.600 5.400h2.700l-2.800 5.800 7.400-7.700h-3l3-3.500z" fill="#f8cc3c" stroke="#e08a14" stroke-width="0.900" stroke-linejoin="round"/></svg>
<span style="left:489.50px;top:333.00px;font: normal 14.5px/1 'Liberation Serif',serif;color:#000;letter-spacing:-0.352px;">Tiền Giang</span>
<span style="left:629.40px;top:334.00px;font: normal 14.5px/1 'Liberation Serif',serif;color:#008000;letter-spacing:0.216px;">(Đã có)</span>
<div style="left:907px;top:331px;width:56px;height:19px;background:#e1e1e1;border:1px solid #adadad;"></div>
<span style="left:919.20px;top:336.00px;font: normal 11.5px/1 'Liberation Sans',sans-serif;color:#000;letter-spacing:-0.388px;">Tải về</span>
<div style="left:455px;top:379px;width:516px;height:1px;background:#c8c8c8;"></div>
<svg style="left:463.5px;top:359.5px" width="18" height="17" viewBox="0 0 18 17"><defs><linearGradient id="dbg" x1="0" y1="0" x2="1" y2="0"><stop offset="0" stop-color="#98a4b0"/><stop offset="0.400" stop-color="#dfe5ea"/><stop offset="1" stop-color="#8e9aa6"/></linearGradient></defs><path d="M0.500 9.600v3c0 1.600 2.900 2.500 6.300 2.500s6.300-0.900 6.300-2.500v-3z" fill="url(#dbg)" stroke="#a2acb6" stroke-width="0.500"/><path d="M0.500 8.200c0 1.600 2.900 2.600 6.300 2.600s6.300-1 6.300-2.600" fill="#d4dbe2" stroke="#8c98a4" stroke-width="0.800"/><path d="M0.500 3.200v4.700c0 1.600 2.900 2.500 6.300 2.500s6.300-0.900 6.300-2.500V3.200z" fill="url(#dbg)" stroke="#a2acb6" stroke-width="0.500"/><ellipse cx="6.800" cy="3.200" rx="6.300" ry="2.500" fill="#dfe5ea" stroke="#9aa6b2" stroke-width="0.800"/><path d="M14.200 5l-4.600 5.400h2.700l-2.800 5.800 7.400-7.700h-3l3-3.500z" fill="#f8cc3c" stroke="#e08a14" stroke-width="0.900" stroke-linejoin="round"/></svg>
<span style="left:489.50px;top:359.00px;font: normal 14.5px/1 'Liberation Serif',serif;color:#000;letter-spacing:-0.139px;">Trà Vinh</span>
<span style="left:629.40px;top:360.00px;font: normal 14.5px/1 'Liberation Serif',serif;color:#008000;letter-spacing:0.216px;">(Đã có)</span>
<div style="left:907px;top:357px;width:56px;height:19px;background:#e1e1e1;border:1px solid #adadad;"></div>
<span style="left:919.20px;top:362.00px;font: normal 11.5px/1 'Liberation Sans',sans-serif;color:#000;letter-spacing:-0.388px;">Tải về</span>
<div style="left:455px;top:405px;width:516px;height:1px;background:#c8c8c8;"></div>
<svg style="left:463.5px;top:385.5px" width="18" height="17" viewBox="0 0 18 17"><defs><linearGradient id="dbg" x1="0" y1="0" x2="1" y2="0"><stop offset="0" stop-color="#98a4b0"/><stop offset="0.400" stop-color="#dfe5ea"/><stop offset="1" stop-color="#8e9aa6"/></linearGradient></defs><path d="M0.500 9.600v3c0 1.600 2.900 2.500 6.300 2.500s6.300-0.900 6.300-2.500v-3z" fill="url(#dbg)" stroke="#a2acb6" stroke-width="0.500"/><path d="M0.500 8.200c0 1.600 2.900 2.600 6.300 2.600s6.300-1 6.300-2.600" fill="#d4dbe2" stroke="#8c98a4" stroke-width="0.800"/><path d="M0.500 3.200v4.700c0 1.600 2.900 2.500 6.300 2.500s6.300-0.900 6.300-2.500V3.200z" fill="url(#dbg)" stroke="#a2acb6" stroke-width="0.500"/><ellipse cx="6.800" cy="3.200" rx="6.300" ry="2.500" fill="#dfe5ea" stroke="#9aa6b2" stroke-width="0.800"/><path d="M14.200 5l-4.600 5.400h2.700l-2.800 5.800 7.400-7.700h-3l3-3.500z" fill="#f8cc3c" stroke="#e08a14" stroke-width="0.900" stroke-linejoin="round"/></svg>
<span style="left:489.50px;top:385.00px;font: normal 14.5px/1 'Liberation Serif',serif;color:#000;letter-spacing:-0.070px;">Trường Sa</span>
<span style="left:629.40px;top:386.00px;font: normal 14.5px/1 'Liberation Serif',serif;color:#008000;letter-spacing:0.216px;">(Đã có)</span>
<div style="left:907px;top:383px;width:56px;height:19px;background:#e1e1e1;border:1px solid #adadad;"></div>
<span style="left:919.20px;top:388.00px;font: normal 11.5px/1 'Liberation Sans',sans-serif;color:#000;letter-spacing:-0.388px;">Tải về</span>
<div style="left:455px;top:431px;width:516px;height:1px;background:#c8c8c8;"></div>
<svg style="left:463.5px;top:411.5px" width="18" height="17" viewBox="0 0 18 17"><defs><linearGradient id="dbg" x1="0" y1="0" x2="1" y2="0"><stop offset="0" stop-color="#98a4b0"/><stop offset="0.400" stop-color="#dfe5ea"/><stop offset="1" stop-color="#8e9aa6"/></linearGradient></defs><path d="M0.500 9.600v3c0 1.600 2.900 2.500 6.300 2.500s6.300-0.900 6.300-2.500v-3z" fill="url(#dbg)" stroke="#a2acb6" stroke-width="0.500"/><path d="M0.500 8.200c0 1.600 2.900 2.600 6.300 2.600s6.300-1 6.300-2.600" fill="#d4dbe2" stroke="#8c98a4" stroke-width="0.800"/><path d="M0.500 3.200v4.700c0 1.600 2.900 2.500 6.300 2.500s6.300-0.900 6.300-2.500V3.200z" fill="url(#dbg)" stroke="#a2acb6" stroke-width="0.500"/><ellipse cx="6.800" cy="3.200" rx="6.300" ry="2.500" fill="#dfe5ea" stroke="#9aa6b2" stroke-width="0.800"/><path d="M14.200 5l-4.600 5.400h2.700l-2.800 5.800 7.400-7.700h-3l3-3.500z" fill="#f8cc3c" stroke="#e08a14" stroke-width="0.900" stroke-linejoin="round"/></svg>
<span style="left:489.50px;top:411.00px;font: normal 14.5px/1 'Liberation Serif',serif;color:#000;letter-spacing:-0.315px;">Truyền hình</span>
<span style="left:629.40px;top:412.00px;font: normal 14.5px/1 'Liberation Serif',serif;color:#008000;letter-spacing:0.216px;">(Đã có)</span>
<div style="left:907px;top:409px;width:56px;height:19px;background:#e1e1e1;border:1px solid #adadad;"></div>
<span style="left:919.20px;top:414.00px;font: normal 11.5px/1 'Liberation Sans',sans-serif;color:#000;letter-spacing:-0.388px;">Tải về</span>
<div style="left:455px;top:457px;width:516px;height:1px;background:#c8c8c8;"></div>
<svg style="left:463.5px;top:437.5px" width="18" height="17" viewBox="0 0 18 17"><defs><linearGradient id="dbg" x1="0" y1="0" x2="1" y2="0"><stop offset="0" stop-color="#98a4b0"/><stop offset="0.400" stop-color="#dfe5ea"/><stop offset="1" stop-color="#8e9aa6"/></linearGradient></defs><path d="M0.500 9.600v3c0 1.600 2.900 2.500 6.300 2.500s6.300-0.900 6.300-2.500v-3z" fill="url(#dbg)" stroke="#a2acb6" stroke-width="0.500"/><path d="M0.500 8.200c0 1.600 2.900 2.600 6.300 2.600s6.300-1 6.300-2.600" fill="#d4dbe2" stroke="#8c98a4" stroke-width="0.800"/><path d="M0.500 3.200v4.700c0 1.600 2.900 2.500 6.300 2.500s6.300-0.900 6.300-2.500V3.200z" fill="url(#dbg)" stroke="#a2acb6" stroke-width="0.500"/><ellipse cx="6.800" cy="3.200" rx="6.300" ry="2.500" fill="#dfe5ea" stroke="#9aa6b2" stroke-width="0.800"/><path d="M14.200 5l-4.600 5.400h2.700l-2.800 5.800 7.400-7.700h-3l3-3.500z" fill="#f8cc3c" stroke="#e08a14" stroke-width="0.900" stroke-linejoin="round"/></svg>
<span style="left:489.50px;top:437.00px;font: normal 14.5px/1 'Liberation Serif',serif;color:#000;letter-spacing:-0.075px;">Tuyên Quang</span>
<span style="left:629.40px;top:438.00px;font: normal 14.5px/1 'Liberation Serif',serif;color:#008000;letter-spacing:0.216px;">(Đã có)</span>
<span style="left:861.00px;top:439.00px;font: bold 12px/1 'Liberation Sans',sans-serif;color:#008000;letter-spacing:0.275px;">Đã tải về máy.</span>
<div style="left:455px;top:483px;width:516px;height:1px;background:#c8c8c8;"></div>
<svg style="left:463.5px;top:463.5px" width="18" height="17" viewBox="0 0 18 17"><defs><linearGradient id="dbg" x1="0" y1="0" x2="1" y2="0"><stop offset="0" stop-color="#98a4b0"/><stop offset="0.400" stop-color="#dfe5ea"/><stop offset="1" stop-color="#8e9aa6"/></linearGradient></defs><path d="M0.500 9.600v3c0 1.600 2.900 2.500 6.300 2.500s6.300-0.900 6.300-2.500v-3z" fill="url(#dbg)" stroke="#a2acb6" stroke-width="0.500"/><path d="M0.500 8.200c0 1.600 2.900 2.600 6.300 2.600s6.300-1 6.300-2.600" fill="#d4dbe2" stroke="#8c98a4" stroke-width="0.800"/><path d="M0.500 3.200v4.700c0 1.600 2.900 2.500 6.300 2.500s6.300-0.900 6.300-2.500V3.200z" fill="url(#dbg)" stroke="#a2acb6" stroke-width="0.500"/><ellipse cx="6.800" cy="3.200" rx="6.300" ry="2.500" fill="#dfe5ea" stroke="#9aa6b2" stroke-width="0.800"/><path d="M14.200 5l-4.600 5.400h2.700l-2.800 5.800 7.400-7.700h-3l3-3.500z" fill="#f8cc3c" stroke="#e08a14" stroke-width="0.900" stroke-linejoin="round"/></svg>
<span style="left:489.50px;top:463.00px;font: normal 14.5px/1 'Liberation Serif',serif;color:#000;letter-spacing:0.064px;">Văn Hóa</span>
<span style="left:629.40px;top:464.00px;font: normal 14.5px/1 'Liberation Serif',serif;color:#008000;letter-spacing:0.216px;">(Đã có)</span>
<div style="left:907px;top:461px;width:56px;height:19px;background:#e1e1e1;border:1px solid #adadad;"></div>
<span style="left:919.20px;top:466.00px;font: normal 11.5px/1 'Liberation Sans',sans-serif;color:#000;letter-spacing:-0.388px;">Tải về</span>
<div style="left:455px;top:509px;width:516px;height:1px;background:#c8c8c8;"></div>
<svg style="left:463.5px;top:489.5px" width="18" height="17" viewBox="0 0 18 17"><defs><linearGradient id="dbg" x1="0" y1="0" x2="1" y2="0"><stop offset="0" stop-color="#98a4b0"/><stop offset="0.400" stop-color="#dfe5ea"/><stop offset="1" stop-color="#8e9aa6"/></linearGradient></defs><path d="M0.500 9.600v3c0 1.600 2.900 2.500 6.300 2.500s6.300-0.900 6.300-2.500v-3z" fill="url(#dbg)" stroke="#a2acb6" stroke-width="0.500"/><path d="M0.500 8.200c0 1.600 2.900 2.600 6.300 2.600s6.300-1 6.300-2.600" fill="#d4dbe2" stroke="#8c98a4" stroke-width="0.800"/><path d="M0.500 3.200v4.700c0 1.600 2.900 2.500 6.300 2.500s6.300-0.900 6.300-2.500V3.200z" fill="url(#dbg)" stroke="#a2acb6" stroke-width="0.500"/><ellipse cx="6.800" cy="3.200" rx="6.300" ry="2.500" fill="#dfe5ea" stroke="#9aa6b2" stroke-width="0.800"/><path d="M14.200 5l-4.600 5.400h2.700l-2.800 5.800 7.400-7.700h-3l3-3.500z" fill="#f8cc3c" stroke="#e08a14" stroke-width="0.900" stroke-linejoin="round"/></svg>
<span style="left:489.50px;top:489.00px;font: normal 14.5px/1 'Liberation Serif',serif;color:#000;letter-spacing:-0.207px;">Viễn thông</span>
<span style="left:629.40px;top:490.00px;font: normal 14.5px/1 'Liberation Serif',serif;color:#008000;letter-spacing:0.216px;">(Đã có)</span>
<div style="left:907px;top:487px;width:56px;height:19px;background:#e1e1e1;border:1px solid #adadad;"></div>
<span style="left:919.20px;top:492.00px;font: normal 11.5px/1 'Liberation Sans',sans-serif;color:#000;letter-spacing:-0.388px;">Tải về</span>
<div style="left:455px;top:535px;width:516px;height:1px;background:#c8c8c8;"></div>
<svg style="left:463.5px;top:515.5px" width="18" height="17" viewBox="0 0 18 17"><defs><linearGradient id="dbg" x1="0" y1="0" x2="1" y2="0"><stop offset="0" stop-color="#98a4b0"/><stop offset="0.400" stop-color="#dfe5ea"/><stop offset="1" stop-color="#8e9aa6"/></linearGradient></defs><path d="M0.500 9.600v3c0 1.600 2.900 2.500 6.300 2.500s6.300-0.900 6.300-2.500v-3z" fill="url(#dbg)" stroke="#a2acb6" stroke-width="0.500"/><path d="M0.500 8.200c0 1.600 2.900 2.600 6.300 2.600s6.300-1 6.300-2.600" fill="#d4dbe2" stroke="#8c98a4" stroke-width="0.800"/><path d="M0.500 3.200v4.700c0 1.600 2.900 2.500 6.300 2.500s6.300-0.900 6.300-2.500V3.200z" fill="url(#dbg)" stroke="#a2acb6" stroke-width="0.500"/><ellipse cx="6.800" cy="3.200" rx="6.300" ry="2.500" fill="#dfe5ea" stroke="#9aa6b2" stroke-width="0.800"/><path d="M14.200 5l-4.600 5.400h2.700l-2.800 5.800 7.400-7.700h-3l3-3.500z" fill="#f8cc3c" stroke="#e08a14" stroke-width="0.900" stroke-linejoin="round"/></svg>
<span style="left:489.50px;top:515.00px;font: normal 14.5px/1 'Liberation Serif',serif;color:#000;letter-spacing:-0.270px;">Vĩnh Long</span>
<span style="left:629.40px;top:516.00px;font: normal 14.5px/1 'Liberation Serif',serif;color:#008000;letter-spacing:0.216px;">(Đã có)</span>
<div style="left:907px;top:513px;width:56px;height:19px;background:#e1e1e1;border:1px solid #adadad;"></div>
<span style="left:919.20px;top:518.00px;font: normal 11.5px/1 'Liberation Sans',sans-serif;color:#000;letter-spacing:-0.388px;">Tải về</span>
<div style="left:455px;top:561px;width:516px;height:1px;background:#c8c8c8;"></div>
<svg style="left:463.5px;top:541.5px" width="18" height="17" viewBox="0 0 18 17"><defs><linearGradient id="dbg" x1="0" y1="0" x2="1" y2="0"><stop offset="0" stop-color="#98a4b0"/><stop offset="0.400" stop-color="#dfe5ea"/><stop offset="1" stop-color="#8e9aa6"/></linearGradient></defs><path d="M0.500 9.600v3c0 1.600 2.900 2.500 6.300 2.500s6.300-0.900 6.300-2.500v-3z" fill="url(#dbg)" stroke="#a2acb6" stroke-width="0.500"/><path d="M0.500 8.200c0 1.600 2.900 2.600 6.300 2.600s6.300-1 6.300-2.600" fill="#d4dbe2" stroke="#8c98a4" stroke-width="0.800"/><path d="M0.500 3.200v4.700c0 1.600 2.900 2.500 6.300 2.500s6.300-0.900 6.300-2.500V3.200z" fill="url(#dbg)" stroke="#a2acb6" stroke-width="0.500"/><ellipse cx="6.800" cy="3.200" rx="6.300" ry="2.500" fill="#dfe5ea" stroke="#9aa6b2" stroke-width="0.800"/><path d="M14.200 5l-4.600 5.400h2.700l-2.800 5.800 7.400-7.700h-3l3-3.500z" fill="#f8cc3c" stroke="#e08a14" stroke-width="0.900" stroke-linejoin="round"/></svg>
<span style="left:489.50px;top:541.00px;font: normal 14.5px/1 'Liberation Serif',serif;color:#000;letter-spacing:-0.103px;">Vĩnh Phúc</span>
<span style="left:629.40px;top:542.00px;font: normal 14.5px/1 'Liberation Serif',serif;color:#008000;letter-spacing:0.216px;">(Đã có)</span>
<div style="left:907px;top:539px;width:56px;height:19px;background:#e1e1e1;border:1px solid #adadad;"></div>
<span style="left:919.20px;top:544.00px;font: normal 11.5px/1 'Liberation Sans',sans-serif;color:#000;letter-spacing:-0.388px;">Tải về</span>
<div style="left:455px;top:587px;width:516px;height:1px;background:#c8c8c8;"></div>
<svg style="left:463.5px;top:567.5px" width="18" height="17" viewBox="0 0 18 17"><defs><linearGradient id="dbg" x1="0" y1="0" x2="1" y2="0"><stop offset="0" stop-color="#98a4b0"/><stop offset="0.400" stop-color="#dfe5ea"/><stop offset="1" stop-color="#8e9aa6"/></linearGradient></defs><path d="M0.500 9.600v3c0 1.600 2.900 2.500 6.300 2.500s6.300-0.900 6.300-2.500v-3z" fill="url(#dbg)" stroke="#a2acb6" stroke-width="0.500"/><path d="M0.500 8.200c0 1.600 2.900 2.600 6.300 2.600s6.300-1 6.300-2.600" fill="#d4dbe2" stroke="#8c98a4" stroke-width="0.800"/><path d="M0.500 3.200v4.700c0 1.600 2.900 2.500 6.300 2.500s6.300-0.900 6.300-2.500V3.200z" fill="url(#dbg)" stroke="#a2acb6" stroke-width="0.500"/><ellipse cx="6.800" cy="3.200" rx="6.300" ry="2.500" fill="#dfe5ea" stroke="#9aa6b2" stroke-width="0.800"/><path d="M14.200 5l-4.600 5.400h2.700l-2.800 5.800 7.400-7.700h-3l3-3.500z" fill="#f8cc3c" stroke="#e08a14" stroke-width="0.900" stroke-linejoin="round"/></svg>
<span style="left:489.50px;top:567.00px;font: normal 14.5px/1 'Liberation Serif',serif;color:#000;letter-spacing:0.169px;">Bà Rịa Vũng Tàu</span>
<div style="left:907px;top:565px;width:56px;height:19px;background:#e1e1e1;border:1px solid #adadad;"></div>
<span style="left:919.20px;top:570.00px;font: normal 11.5px/1 'Liberation Sans',sans-serif;color:#000;letter-spacing:-0.388px;">Tải về</span>
<div style="left:455px;top:613px;width:516px;height:1px;background:#c8c8c8;"></div>
<svg style="left:463.5px;top:593.5px" width="18" height="17" viewBox="0 0 18 17"><defs><linearGradient id="dbg" x1="0" y1="0" x2="1" y2="0"><stop offset="0" stop-color="#98a4b0"/><stop offset="0.400" stop-color="#dfe5ea"/><stop offset="1" stop-color="#8e9aa6"/></linearGradient></defs><path d="M0.500 9.600v3c0 1.600 2.900 2.500 6.300 2.500s6.300-0.900 6.300-2.500v-3z" fill="url(#dbg)" stroke="#a2acb6" stroke-width="0.500"/><path d="M0.500 8.200c0 1.600 2.900 2.600 6.300 2.600s6.300-1 6.300-2.600" fill="#d4dbe2" stroke="#8c98a4" stroke-width="0.800"/><path d="M0.500 3.200v4.700c0 1.600 2.900 2.500 6.300 2.500s6.300-0.900 6.300-2.500V3.200z" fill="url(#dbg)" stroke="#a2acb6" stroke-width="0.500"/><ellipse cx="6.800" cy="3.200" rx="6.300" ry="2.500" fill="#dfe5ea" stroke="#9aa6b2" stroke-width="0.800"/><path d="M14.200 5l-4.600 5.400h2.700l-2.800 5.800 7.400-7.700h-3l3-3.500z" fill="#f8cc3c" stroke="#e08a14" stroke-width="0.900" stroke-linejoin="round"/></svg>
<span style="left:489.50px;top:593.00px;font: normal 14.5px/1 'Liberation Serif',serif;color:#000;letter-spacing:-0.021px;">Xăng dầu</span>
<span style="left:629.40px;top:594.00px;font: normal 14.5px/1 'Liberation Serif',serif;color:#008000;letter-spacing:0.216px;">(Đã có)</span>
<div style="left:907px;top:591px;width:56px;height:19px;background:#e1e1e1;border:1px solid #adadad;"></div>
<span style="left:919.20px;top:596.00px;font: normal 11.5px/1 'Liberation Sans',sans-serif;color:#000;letter-spacing:-0.388px;">Tải về</span>
<div style="left:455px;top:639px;width:516px;height:1px;background:#c8c8c8;"></div>
<svg style="left:463.5px;top:619.5px" width="18" height="17" viewBox="0 0 18 17"><defs><linearGradient id="dbg" x1="0" y1="0" x2="1" y2="0"><stop offset="0" stop-color="#98a4b0"/><stop offset="0.400" stop-color="#dfe5ea"/><stop offset="1" stop-color="#8e9aa6"/></linearGradient></defs><path d="M0.500 9.600v3c0 1.600 2.900 2.500 6.300 2.500s6.300-0.900 6.300-2.500v-3z" fill="url(#dbg)" stroke="#a2acb6" stroke-width="0.500"/><path d="M0.500 8.200c0 1.600 2.900 2.600 6.300 2.600s6.300-1 6.300-2.600" fill="#d4dbe2" stroke="#8c98a4" stroke-width="0.800"/><path d="M0.500 3.200v4.700c0 1.600 2.900 2.500 6.300 2.500s6.300-0.900 6.300-2.500V3.200z" fill="url(#dbg)" stroke="#a2acb6" stroke-width="0.500"/><ellipse cx="6.800" cy="3.200" rx="6.300" ry="2.500" fill="#dfe5ea" stroke="#9aa6b2" stroke-width="0.800"/><path d="M14.200 5l-4.600 5.400h2.700l-2.800 5.800 7.400-7.700h-3l3-3.500z" fill="#f8cc3c" stroke="#e08a14" stroke-width="0.900" stroke-linejoin="round"/></svg>
<span style="left:489.50px;top:619.00px;font: normal 14.5px/1 'Liberation Serif',serif;color:#000;letter-spacing:0.025px;">Yên Bái</span>
<span style="left:629.40px;top:620.00px;font: normal 14.5px/1 'Liberation Serif',serif;color:#008000;letter-spacing:0.216px;">(Đã có)</span>
<div style="left:907px;top:617px;width:56px;height:19px;background:#e1e1e1;border:1px solid #adadad;"></div>
<span style="left:919.20px;top:622.00px;font: normal 11.5px/1 'Liberation Sans',sans-serif;color:#000;letter-spacing:-0.388px;">Tải về</span>
<div style="left:972px;top:243px;width:17px;height:398px;background:#f0f0f0;"></div>
<div style="left:973px;top:556px;width:15px;height:67px;background:#cdcdcd;"></div>
<svg style="left:972.5px;top:244.5px" width="16" height="16" viewBox="-8 -8 16 16"><path d="M-3.4 1.75L0 -1.75L3.4 1.75" stroke="#606060" stroke-width="1.9" fill="none"/></svg>
<svg style="left:973px;top:624px" width="16" height="16" viewBox="-8 -8 16 16"><path d="M-3.4 -1.75L0 1.75L3.4 -1.75" stroke="#606060" stroke-width="1.9" fill="none"/></svg>
<div style="left:450px;top:642px;width:539px;height:41px;background:#f0f0f0;"></div>
<div style="left:900px;top:651px;width:80px;height:22px;background:#e1e1e1;border:1px solid #adadad;"></div>
<span style="left:926.00px;top:657.00px;font: normal 11.5px/1 'Liberation Sans',sans-serif;color:#000;letter-spacing:-0.525px;">Đóng</span>
<svg style="left:0;top:0" width="1440" height="900" viewBox="0 0 1440 900"><g stroke="#ed1c24" fill="none" stroke-linecap="round"><ellipse cx="525" cy="64" rx="63.500" ry="35.500" stroke-width="5" transform="rotate(-2 525 64)"/><path d="M578.500 73L716 192" stroke-width="5"/><path d="M768 240L757 384" stroke-width="5"/><ellipse cx="718" cy="447" rx="297" ry="34" stroke-width="4.500"/></g></svg>
<span style="left:713.00px;top:182.00px;font: bold 27px/1 'Liberation Serif',serif;color:#ed1c24;letter-spacing:0.045px;">Tải đơn giá tỉnh</span>
<span style="left:713.00px;top:213.00px;font: bold 27px/1 'Liberation Serif',serif;color:#ed1c24;letter-spacing:0.105px;">Tuyên Quang</span></div></body></html>
